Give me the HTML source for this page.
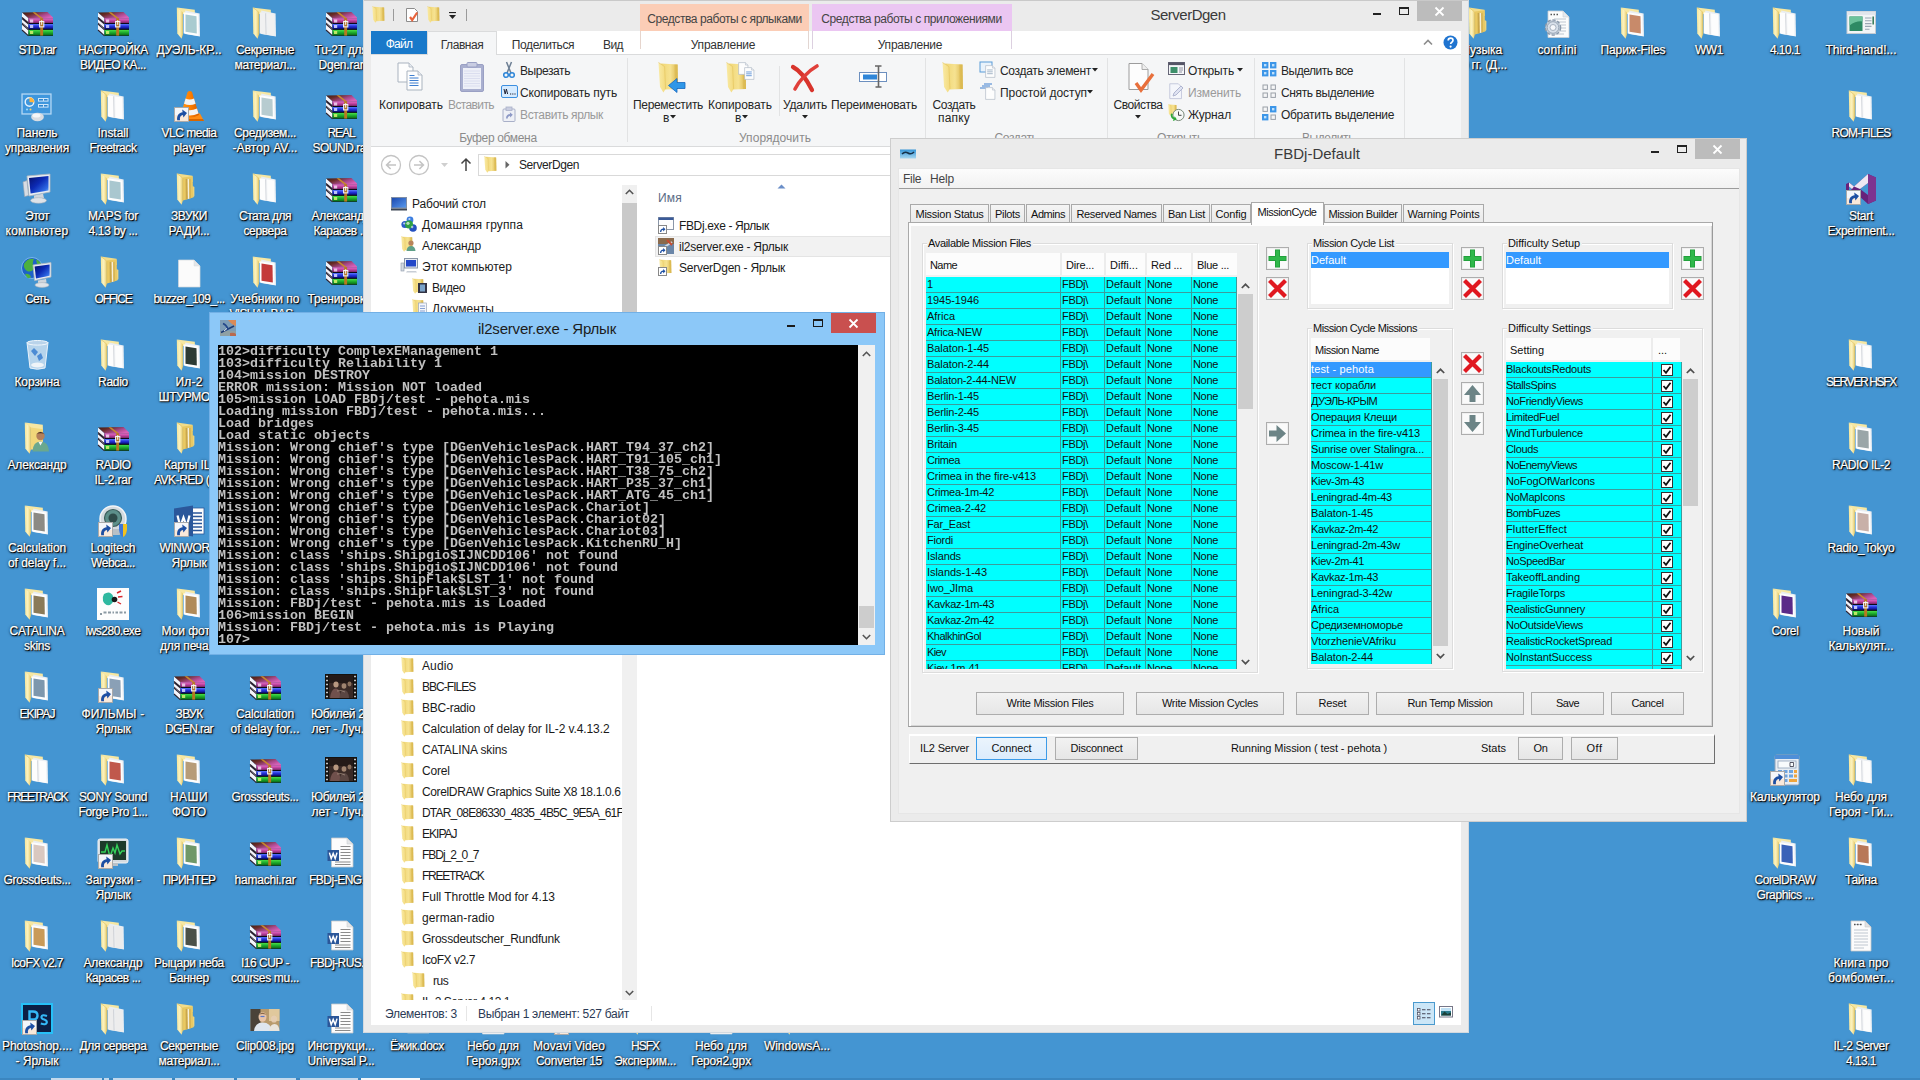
<!DOCTYPE html>
<html><head><meta charset="utf-8"><title>desktop</title>
<style>
*{box-sizing:border-box;margin:0;padding:0}
html,body{width:1920px;height:1080px;overflow:hidden}
body{background:#4495d2;font-family:"Liberation Sans",sans-serif;font-size:12px;color:#000;position:relative}
.abs{position:absolute}
.t{position:absolute;white-space:nowrap;line-height:14px}
/* desktop icons */
.di{position:absolute;width:76px;height:83px}
.di svg.ic{position:absolute;left:22px;top:7px;width:32px;height:32px;overflow:visible}
.di svg.sc{position:absolute;left:23px;top:24px;width:15px;height:15px}
.di .lb{position:absolute;left:-12px;width:100px;top:43px;text-align:center;color:#fff;font-size:12px;line-height:15px;letter-spacing:-0.25px;white-space:nowrap;
 -webkit-text-stroke:.25px #fff;text-shadow:1px 1px 0 rgba(0,0,0,.8),1px 1px 2px #000,0 0 3px rgba(0,0,0,.55),0 1px 1px rgba(0,0,0,.5)}
/* explorer */
#ex{position:absolute;left:363px;top:0;width:1106px;height:1033px;background:#ebebeb;border:1px solid #b9b9b9;border-top-color:#c8c8c8;overflow:hidden}
#ex .t{font-size:12px;letter-spacing:-0.15px;color:#262626}
/* console */
#co{position:absolute;left:209px;top:312px;width:676px;height:343px;background:#8cc8f8;border:1px solid #5f9ed1;box-shadow:0 0 6px rgba(0,0,0,.25);overflow:hidden}
#co pre{filter:grayscale(1);position:absolute;left:9px;top:33px;width:640px;height:300px;background:#000;color:#c0c0c0;font-family:"Liberation Mono",monospace;font-weight:bold;font-size:13.33px;line-height:12px;overflow:hidden;letter-spacing:0}
/* fbdj */
#fb{position:absolute;left:890px;top:138px;width:857px;height:684px;background:#ebebeb;border:1px solid #b4b4b4;overflow:hidden}
#fb .t{font-size:11px;letter-spacing:-0.3px;line-height:13px;color:#111}
</style></head>
<body>
<svg width="0" height="0" style="position:absolute"><defs>
<linearGradient id="gTop" x1="0" y1="0" x2="1" y2="0.6"><stop offset="0" stop-color="#3c1c10"/><stop offset=".35" stop-color="#6a2c28"/><stop offset=".7" stop-color="#a8488a"/><stop offset="1" stop-color="#d860b8"/></linearGradient>
<linearGradient id="gPur" x1="0" y1="0" x2="0" y2="1"><stop offset="0" stop-color="#e670c8"/><stop offset=".5" stop-color="#c044a0"/><stop offset="1" stop-color="#7a2466"/></linearGradient>
<linearGradient id="gBlu" x1="0" y1="0" x2="0" y2="1"><stop offset="0" stop-color="#5a78ff"/><stop offset=".5" stop-color="#2230d8"/><stop offset="1" stop-color="#0a1080"/></linearGradient>
<linearGradient id="gGrn" x1="0" y1="0" x2="0" y2="1"><stop offset="0" stop-color="#48e048"/><stop offset=".5" stop-color="#1ca82c"/><stop offset="1" stop-color="#0a6414"/></linearGradient>
<linearGradient id="gFold" x1="0" y1="0" x2="1" y2="1"><stop offset="0" stop-color="#fbf0b4"/><stop offset=".6" stop-color="#f3db80"/><stop offset="1" stop-color="#e4c25c"/></linearGradient>
<linearGradient id="gFoldS" x1="0" y1="0" x2="1" y2="0"><stop offset="0" stop-color="#f7e699"/><stop offset=".5" stop-color="#fbf2c0"/><stop offset="1" stop-color="#e8c964"/></linearGradient>
<linearGradient id="gCone" x1="0" y1="0" x2="1" y2="0"><stop offset="0" stop-color="#ff9a1e"/><stop offset=".5" stop-color="#ff8000"/><stop offset="1" stop-color="#d85e00"/></linearGradient>
<linearGradient id="gScr" x1="0" y1="0" x2="1" y2="1"><stop offset="0" stop-color="#06106a"/><stop offset=".45" stop-color="#0c2ab4"/><stop offset=".8" stop-color="#2f6ae4"/><stop offset="1" stop-color="#8cc4ff"/></linearGradient>


<linearGradient id="gFw1" x1="0" y1="0" x2="1" y2="0"><stop offset="0" stop-color="#f0d674"/><stop offset=".55" stop-color="#f6e291"/><stop offset="1" stop-color="#dcb84e"/></linearGradient>
<linearGradient id="gFw2" x1="0" y1="0" x2="1" y2="0"><stop offset="0" stop-color="#f9eaa4"/><stop offset="1" stop-color="#f3da7e"/></linearGradient>
<symbol id="fwin" viewBox="0 0 21 31" preserveAspectRatio="none">
 <polygon points="3,1.5 19.6,2.6 20,27 7,27.6" fill="url(#gFw1)"/>
 <polygon points="16.5,2.4 19.6,2.6 20,27 17,27.1" fill="#d9b64c" opacity=".55"/>
 <polygon points="0.5,0.5 6.6,4.6 7.6,27 5.4,30.6 2,25" fill="url(#gFw2)"/>
 <path d="M0.5 0.5 L6.6 4.6 L7.6 27" fill="none" stroke="#e3c25c" stroke-width=".6"/>
</symbol>

<symbol id="rar" viewBox="0 0 32 32">
 <polygon points="1,5.5 26.5,5 32.5,11 7.5,11.5" fill="url(#gTop)"/>
 <polygon points="1,5.8 7.5,11.6 7.5,28.8 1,23" fill="#f4f4fa"/>
 <path d="M1 11.6 L7.5 17.2 M1 17.2 L7.5 22.8 M1 23 L7.5 28.8 M1 10.3 L7.5 16" stroke="#2a2230" stroke-width="1.1" fill="none"/>
 <path d="M1 15.9 L7.5 21.6" stroke="#2a2230" stroke-width="1" fill="none"/>
 <rect x="7.5" y="11.2" width="25" height="17.6" fill="#0a0a18"/>
 <rect x="7.5" y="11.2" width="25" height="4.8" fill="url(#gPur)"/>
 <rect x="7.5" y="17" width="25" height="4.8" fill="url(#gBlu)"/>
 <rect x="7.5" y="22.9" width="25" height="5.6" fill="url(#gGrn)"/>
 <rect x="9" y="12.5" width="3.2" height="3" fill="#f0d8ee" opacity=".85"/>
 <rect x="9" y="18" width="3.2" height="3" fill="#d8dcff" opacity=".85"/>
 <rect x="9" y="24" width="3.2" height="3" fill="#d8f070" opacity=".85"/>
 <polygon points="11.5,5.2 14,5.2 21.8,11.2 19.2,11.2" fill="#c88a2c"/>
 <rect x="19.2" y="11.2" width="2.9" height="17.4" fill="#b87820"/>
 <rect x="18.6" y="14.5" width="4.2" height="5.4" fill="none" stroke="#f2f2f2" stroke-width="1.1"/>
 <rect x="20.2" y="13.2" width="1" height="4.6" fill="#fafafa"/>
</symbol>

<symbol id="folder" viewBox="0 0 32 32">
 <polygon points="4,0.6 21.8,2.8 22,9 10,7" fill="#f6e7a2"/>
 <polygon points="12.2,3.6 26.6,6.4 27,29.6 12.2,27" fill="#e9eef3"/>
 <polygon points="10.6,5.2 25.2,7.6 25.6,29 10.6,26.4" style="fill:var(--p,#fdfdfd)"/>
 <path d="M16.800 6.300 L17.200 27.600" stroke="#b9bec6" stroke-width=".8"/>
 <path d="M17.600 6.400 L18 27.700" stroke="#eef0f3" stroke-width=".8"/>
 <polygon points="3.8,0.4 9.9,5.2 9.9,27.4 8.6,31.8 4.3,26.6" fill="url(#gFoldS)"/>
 <path d="M3.8 0.4 L9.9 5.2 L9.9 27.400" fill="none" stroke="#e0bf58" stroke-width=".5"/>
</symbol>


<symbol id="folderf" viewBox="0 0 32 32">
 <polygon points="4,0.600 19.500,2.800 19.800,9 10,7" fill="#f2dc8a"/>
 <polygon points="9.900,4.400 19.600,3.200 20.200,24.500 9.900,27.400" fill="#e9c963"/>
 <polygon points="12.600,6 14.600,5.700 14.900,26 12.800,26.600" fill="#c9a64a"/>
 <polygon points="14.600,5.700 16.200,6.200 16.400,25.600 14.900,26" fill="#f6f0dc"/>
 <polygon points="16.200,6.200 17.600,5.800 17.900,25.200 16.400,25.600" fill="#d2b054"/>
 <polygon points="19.600,13 21.400,14 21.400,23 20.200,24.500" fill="#eed37a"/>
 <polygon points="3.800,0.400 9.900,5.200 9.900,27.400 8.600,31.800 4.300,26.600" fill="url(#gFoldS)"/>
 <path d="M3.800 0.400 L9.900 5.200 L9.900 27.400" fill="none" stroke="#e0bf58" stroke-width=".5"/>
</symbol>

<symbol id="folderb" viewBox="0 0 32 32">
 <polygon points="4,0.6 21.8,2.8 22,9 10,7" fill="#f6e7a2"/>
 <polygon points="12.2,3.6 26.6,6.4 27,29.6 12.2,27" fill="#e9eef3"/>
 <polygon points="10.6,5.2 25.2,7.6 25.6,29 10.6,26.4" fill="#fdfdfd"/>
 <polygon points="12.5,7.5 23.5,9.3 23.8,26.6 12.5,24.7" style="fill:var(--p,#8fb0b8)"/>
 <polygon points="3.8,0.4 9.9,5.2 9.9,27.4 8.6,31.8 4.3,26.6" fill="url(#gFoldS)"/>
</symbol>

<symbol id="fsm" viewBox="0 0 16 16">
 <path d="M1.5 1.5 h5 l1 1.5 h6.5 v11.5 h-12.5z" fill="#e6c35a"/>
 <path d="M1.5 4.5 h12.5 v10 h-12.5z" fill="#f7e08a"/>
 <path d="M9.5 1.8 h4 v12.7 h-4z" fill="#f2d264" opacity=".8"/>
 <path d="M1.5 14.5 h12.5" stroke="#cfa83e" stroke-width=".8"/>
</symbol>

<symbol id="doc" viewBox="0 0 32 32">
 <path d="M5.500 4 h15.500 l6 6 v21 h-21.500z" fill="#fbfbfb" stroke="#d4d8dc" stroke-width=".7"/>
 <path d="M21 4 v6 h6z" fill="#e4e6e8" stroke="#d4d8dc" stroke-width=".5"/>
</symbol>

<symbol id="txt" viewBox="0 0 32 32">
 <path d="M6 1 h14 l6 6 v24 h-20z" fill="#fcfcfc" stroke="#c9c9c9" stroke-width=".8"/>
 <path d="M20 1 v6 h6z" fill="#e2e2e2" stroke="#c9c9c9" stroke-width=".6"/>
 <path d="M9 4.5h8 M9 10h14 M9 13h14 M9 16h14 M9 19h14 M9 22h14 M9 25h14 M9 28h10" stroke="#b9c2cc" stroke-width=".9"/>
 <path d="M9 4.5h1.5 M12 4.5h1.5 M15 4.5h1.5" stroke="#555" stroke-width="1.4"/>
</symbol>

<symbol id="ini" viewBox="0 0 32 32">
 <path d="M7 4 h15 l6 6 v20.500 h-21z" fill="#fcfcfc" stroke="#c9ced4" stroke-width=".8"/>
 <path d="M22 4v6h6" fill="#e6e9ec" stroke="#c9ced4" stroke-width=".6"/>
 <path d="M13 12h12 M13 15h12 M13 18h12 M13 21h12 M13 24h12 M13 27h10" stroke="#b9c2cc" stroke-width=".9"/>
 <path d="M9.500 7.500h1.500 M12.500 7.500h1.500 M15.500 7.500h1.500" stroke="#555" stroke-width="1.400"/>
 <circle cx="12" cy="20.500" r="7.600" fill="#c6d0dc" stroke="#8a98aa" stroke-width="1.400" stroke-dasharray="3.200 1.800"/>
 <circle cx="12" cy="20.500" r="5.800" fill="#d8e0ea" stroke="#8d9aab" stroke-width=".8"/>
 <circle cx="12" cy="20.500" r="3" fill="#f6f8fb" stroke="#8d9aab" stroke-width=".7"/>
</symbol>

<symbol id="word" viewBox="0 0 32 32">
 <path d="M6.500 1 h15.500 l6 6 v23 h-21.500z" fill="#fcfcfc" stroke="#c4c8cc" stroke-width=".8"/>
 <path d="M22 1 v6 h6z" fill="#e4e6e8" stroke="#c4c8cc" stroke-width=".5"/>
 <path d="M15.500 9.500h10 M15.500 12.500h10 M15.500 15.500h10 M15.500 18.500h10 M15.500 21.500h10 M10 25h15.500 M10 27.500h15.500" stroke="#8a8a8a" stroke-width="1"/>
 <rect x="2.500" y="13" width="11.500" height="11" fill="#2a5699"/>
 <path d="M4.400 15.600 L6.200 21.600 L8.200 16.600 L10.200 21.600 L12 15.600" fill="none" stroke="#fff" stroke-width="1.500"/>
</symbol>


<symbol id="wordapp" viewBox="0 0 32 32">
 <rect x="15" y="3" width="16" height="26" fill="#fdfdfd" stroke="#2b579a" stroke-width=".8"/>
 <path d="M20 8h9M20 11.500h9M20 15h9M20 18.500h9M20 22h9M20 25.500h9" stroke="#2b579a" stroke-width="1.300"/>
 <polygon points="1,3.500 20,0.500 20,31.500 1,28.500" fill="#2b579a"/>
 <path d="M4.500 10.500 L7.300 21.500 L10.500 12.500 L13.700 21.500 L16.500 10.500" fill="none" stroke="#fff" stroke-width="2.200"/>
</symbol>

<symbol id="sc" viewBox="0 0 15 15">
 <rect x=".5" y=".5" width="14" height="14" fill="#f4f6fa" stroke="#a9a9a9" stroke-width="1"/>
 <rect x="1" y="8" width="13" height="6" fill="#fbe6d2" opacity=".8"/>
 <path d="M3.2 13.2 C2.6 8.5 5 5.5 8.6 5.2 L8.2 2.6 L13 6 L9.4 10.6 L9 8 C6.8 8.2 5.4 10 6 13.2z" fill="#1d4fa3"/>
</symbol>

<symbol id="vlc" viewBox="0 0 32 32">
 <polygon points="3,31 31,31 27,23.5 7,23.5" fill="#ff8c14"/>
 <polygon points="3,31 31,31 30,29 4,29" fill="#d86600"/>
 <path d="M14.6 2 Q16.8 -0.2 19 2 L26 25 Q16.8 30 7.6 25z" fill="url(#gCone)"/>
 <path d="M12.6 8.6 Q16.8 10.6 21 8.6 L22.6 13.8 Q16.8 16.4 11 13.8z" fill="#f4f4f4"/>
 <path d="M9.6 18.6 Q16.8 22 24 18.6 L25.5 23.4 Q16.8 27.4 8.1 23.4z" fill="#f4f4f4"/>
</symbol>

<symbol id="cpanel" viewBox="0 0 32 32">
 <rect x="1" y="4" width="29" height="20" fill="#4ea3e4" stroke="#b9daf5" stroke-width="1.2"/>
 <rect x="2" y="5" width="27" height="18" fill="#3f97dd"/>
 <circle cx="8.5" cy="12" r="4.3" fill="none" stroke="#e8f3fc" stroke-width="1.4"/>
 <path d="M8.5 12 L8.5 7.2 A4.8 4.8 0 0 1 13.2 12.6z" fill="#ffb43c"/>
 <rect x="17" y="8" width="10.5" height="3.6" fill="#cfe7fa"/><rect x="18" y="9" width="4" height="1.6" fill="#2f86cf"/><rect x="23" y="9" width="3.5" height="1.6" fill="#2f86cf"/>
 <rect x="17" y="14" width="10.5" height="3.6" fill="#cfe7fa"/><rect x="18" y="15" width="4" height="1.6" fill="#2f86cf"/><rect x="23" y="15" width="3.5" height="1.6" fill="#2f86cf"/>
 <circle cx="6" cy="19.5" r="1" fill="#9fe0ff"/><circle cx="9.5" cy="19.5" r="1" fill="#ffd060"/>
 <ellipse cx="16.5" cy="27" rx="6.4" ry="4.2" fill="#d9dde2"/><ellipse cx="15.5" cy="25.6" rx="4" ry="2" fill="#f4f6f8"/>
</symbol>

<symbol id="computer" viewBox="0 0 32 32">
 <polygon points="6,3 29,1 29,19 8,23" fill="#e9edf2" stroke="#aeb7c2" stroke-width=".8"/>
 <polygon points="8,5 27.5,3 27.5,17.5 9.6,20.6" fill="url(#gScr)"/>
 <polygon points="2,9 6,7.6 7.6,22.5 3.6,23.6" fill="#d7dce3" stroke="#9aa4b0" stroke-width=".6"/>
 <polygon points="13,22.5 22,20.8 23,25 13,26.5" fill="#cfd5dc"/>
 <ellipse cx="17.5" cy="27.5" rx="8" ry="2.8" fill="#dfe3e8" stroke="#aab2bc" stroke-width=".6"/>
</symbol>

<symbol id="network" viewBox="0 0 32 32">
 <circle cx="11" cy="12" r="10.5" fill="#1d62c8"/>
 <circle cx="11" cy="12" r="10.5" fill="none" stroke="#7ab6ee" stroke-width="1"/>
 <path d="M3 8 Q7 1.500 13 3 Q10 8 14 12 Q10 17 6 15 Q2 12 3 8z" fill="#4cb040"/>
 <path d="M4 18 Q8 17 10 21 Q8 23 6 21.500z" fill="#4cb040"/>
 <path d="M15 3.500 Q19 5 20 8 L16 8z" fill="#4cb040"/>
 <polygon points="12,9 30,6.6 30,21 13.6,24.6" fill="#e9edf2" stroke="#aeb7c2" stroke-width=".8"/>
 <polygon points="13.6,10.6 28.6,8.6 28.6,19.8 15,22.6" fill="url(#gScr)"/>
 <polygon points="17,24.5 25,23 25.6,26.6 17,28" fill="#cfd5dc"/>
 <ellipse cx="21" cy="29" rx="7" ry="2.4" fill="#dfe3e8" stroke="#aab2bc" stroke-width=".6"/>
</symbol>

<symbol id="bin" viewBox="0 0 32 32">
 <path d="M6 3.5 Q16 0.5 27 3.5 L24 29 Q16 31.5 9 29z" fill="#d6e6f4" fill-opacity=".78" stroke="#e9f2fa" stroke-width="1"/>
 <ellipse cx="16.5" cy="3.8" rx="10.5" ry="2.3" fill="#b9d3ea" stroke="#f1f7fc" stroke-width="1"/>
 <path d="M10 12 L13 9 L17 13 L14 17z M16 17 L20 14 L22 19 L18 22z" fill="#3b7fd0" opacity=".85"/>
 <ellipse cx="16.5" cy="26" rx="6.4" ry="2.6" fill="#f5f7fa" opacity=".9"/>
</symbol>

<symbol id="user" viewBox="0 0 32 32">
 <polygon points="4,0.6 21.8,2.8 22,9 10,7" fill="#f6e7a2"/>
 <polygon points="3.8,0.4 9.9,5.2 9.9,27.4 8.6,31.8 4.3,26.6" fill="url(#gFoldS)"/>
 <polygon points="9.9,5.4 22,7.2 22,28 9.9,27.4" fill="#f1d77a"/>
 <circle cx="19.5" cy="14" r="4.2" fill="#b4805a"/>
 <path d="M15 12.6 Q19.5 7.5 24 12.6 Q22 10.8 19.5 11.2 Q17 10.8 15 12.6z" fill="#3c2a1e"/>
 <path d="M11.5 29.5 Q12 19.5 19.5 19.5 Q27.5 19.5 28 29.5z" fill="#6aa88e"/>
 <path d="M17.4 19.8 L19.5 23.5 L21.6 19.8z" fill="#f4f4f4"/>
</symbol>

<symbol id="webcam" viewBox="0 0 32 32">
 <circle cx="16" cy="14" r="13" fill="#d4dadf" stroke="#f3f5f7" stroke-width="1.5"/>
 <circle cx="16" cy="13" r="8.5" fill="#5d8f8a" stroke="#3d5f5c" stroke-width="1.2"/>
 <circle cx="16" cy="13" r="4.5" fill="#2f4b49"/>
 <rect x="8" y="24" width="16" height="6" rx="2" fill="#b8c0c6"/>
 <path d="M22 19 l8 0 l0 6 q-1 6 -4 7 q-3 -1 -4 -7z" fill="#3f78d8"/>
 <path d="M26 19 l4 0 l0 6 q-1 6 -4 7z" fill="#f2c21e"/>
</symbol>

<symbol id="logi" viewBox="0 0 32 32">
 <rect x="0" y="0" width="32" height="32" fill="#fdfdfd"/>
 <path d="M7 6 Q13 2 16 8 Q18 14 13 17 Q8 18 6 13 Q5 9 7 6z" fill="#2fb8a0"/>
 <circle cx="17.5" cy="11.5" r="2.8" fill="#1b1b1b"/>
 <path d="M20 5 L24 3 M21 9 L25.5 8.5 M20.5 14 L24 16" stroke="#d8262c" stroke-width="1.4"/>
 <rect x="3" y="22" width="26" height="5" fill="#fdfdfd"/>
 <path d="M3 26h2 M6.5 24.5h3 M11 24.5h3 M15.5 24.5h1.5 M18.5 24.5h2.5 M22.5 24.5h3 M27 24.5h2" stroke="#8c9aa3" stroke-width="2.2"/>
</symbol>

<symbol id="monitor" viewBox="0 0 32 32">
 <rect x="1" y="2" width="30" height="24" rx="2" fill="#d5dbe0" stroke="#f1f3f5" stroke-width="1"/>
 <rect x="3" y="4" width="26" height="19" fill="#1d3b2a"/>
 <path d="M4 15 h4 l2 -7 l3 12 l3 -9 l2 5 l2 -8 l3 9 l2 -3 h3" stroke="#35d25a" stroke-width="1.4" fill="none"/>
 <rect x="11" y="26" width="10" height="3" fill="#b9c1c8"/>
</symbol>

<symbol id="ps" viewBox="0 0 32 32">
 <rect x="1" y="1" width="30" height="29" fill="#0c1f45" stroke="#26c0f8" stroke-width="2"/>
 <path d="M8.500 23 V8.500 H12 Q16.500 8.500 16.500 12.500 Q16.500 16.500 12 16.500 H8.500" fill="none" stroke="#35b8f6" stroke-width="2.400"/>
 <path d="M26 13 q-5 -2 -5.600 1 q0 1.800 2.800 2.600 q3 1 2.600 3 q-0.800 2.800 -6 1" fill="none" stroke="#35b8f6" stroke-width="2.100"/>
</symbol>

<symbol id="photo" viewBox="0 0 32 32">
 <rect x="1.500" y="6" width="29" height="22" fill="#b89a6c"/>
 <rect x="1.500" y="6" width="10" height="22" fill="#4a4238"/>
 <rect x="20" y="6" width="10.500" height="12" fill="#e0c89c"/>
 <ellipse cx="13.500" cy="14" rx="4" ry="4.800" fill="#e8c4a8"/>
 <path d="M5 28 Q6 19.500 13.500 19.500 Q22 19.500 23 28z" fill="#dfe6ee"/>
 <ellipse cx="25" cy="16" rx="3" ry="3.600" fill="#e6cdb4" opacity=".9"/>
 <path d="M20 28 Q21 21 25.500 21 Q30 21 30.500 28z" fill="#e9e4dc"/>
 <path d="M9.600 12 Q13.500 7.500 17.400 12 Q13.500 10.200 9.600 12z" fill="#8a6a48"/>
 <path d="M11.500 13.500h4" stroke="#5a78c8" stroke-width="1.200"/>
</symbol>

<symbol id="video" viewBox="0 0 32 32">
 <rect x="0" y="3" width="32" height="25" fill="#141210"/>
 <rect x="4" y="4" width="24" height="23" fill="#3a2a26"/>
 <rect x="4" y="4" width="24" height="8" fill="#241a18"/>
 <ellipse cx="11" cy="13.500" rx="2.600" ry="3" fill="#b89880"/><ellipse cx="19" cy="15" rx="2.400" ry="2.800" fill="#a08470"/><ellipse cx="24.500" cy="13" rx="2" ry="2.400" fill="#8a705c"/>
 <path d="M5 27 Q6 17.500 11 17.500 Q15.500 18 15.500 27z" fill="#70504c"/><path d="M14.500 27 Q15 19 19 19 Q23.500 19 24 27z" fill="#5a4642"/>
 <path d="M12 20 q4 -1.500 8 1" stroke="#c8b4a0" stroke-width="1" fill="none" opacity=".5"/>
 <path d="M1 5.500h2 M1 9.500h2 M1 13.500h2 M1 17.500h2 M1 21.500h2 M1 25.500h2 M29 5.500h2 M29 9.500h2 M29 13.500h2 M29 17.500h2 M29 21.500h2 M29 25.500h2" stroke="#c4c4c4" stroke-width="1.600"/>
</symbol>

<symbol id="calc" viewBox="0 0 32 32">
 <rect x="6" y="1" width="24" height="30" rx="1.5" fill="#e8edf3" stroke="#8ea2ba" stroke-width="1"/>
 <rect x="6" y="1" width="24" height="4" fill="#4f8fd8"/>
 <rect x="9" y="7" width="18" height="7" fill="#f8fbfd" stroke="#8ea2ba" stroke-width=".8"/>
 <path d="M21 8.5h3.6v4h-3.6z" fill="none" stroke="#445" stroke-width=".9"/>
 <g fill="#6da4e0"><rect x="9" y="16" width="4" height="3"/><rect x="14.5" y="16" width="4" height="3"/><rect x="20" y="16" width="4" height="3"/><rect x="9" y="20.5" width="4" height="3"/><rect x="14.5" y="20.5" width="4" height="3"/><rect x="20" y="20.5" width="4" height="3"/><rect x="9" y="25" width="4" height="3"/><rect x="14.5" y="25" width="4" height="3"/></g>
 <g fill="#f0a53c"><rect x="25" y="16" width="3" height="3"/><rect x="25" y="20.5" width="3" height="3"/><rect x="20" y="25" width="8" height="3"/></g>
</symbol>

<symbol id="vs" viewBox="0 0 32 32">
 <path d="M23 1 L31 4.5 V27.5 L23 31 L9 18.5 L4 22.5 L1 21 V11 L4 9.5 L9 13.5z M23 10 L15 16 L23 22z M4 13.5 V18.5 L7 16z" fill="#68217a" fill-rule="evenodd"/>
 <path d="M23 1 L31 4.5 V27.5 L23 31z" fill="#7d3390"/>
 <path d="M9 13.5 L23 1 V10 L15 16z" fill="#f7f2fa" opacity=".95"/>
 <path d="M4 9.5 L9 13.5 L7 16 L4 13.5z" fill="#f7f2fa" opacity=".95"/>
</symbol>

<symbol id="appwin" viewBox="0 0 32 32">
 <rect x="2" y="4.500" width="28.500" height="22" fill="#f3f5f7" stroke="#c4cbd3" stroke-width="1"/>
 <rect x="2" y="4.500" width="28.500" height="3.400" fill="#e1e6ec"/>
 <rect x="4.500" y="9.500" width="13" height="14.500" fill="#2d8a64"/>
 <path d="M4.500 9.500h13v5q-6 -1 -13 4z" fill="#6cc29c"/>
 <path d="M20 11h6.500 M20 13.800h6.500 M20 16.600h6.500 M20 19.400h6.500 M20 22.200h4.500" stroke="#9aa6b3" stroke-width="1.100"/>
 <rect x="27.400" y="9.500" width="1.600" height="8" fill="#3d7f5f"/>
</symbol>
</defs></svg>
<div id="desk">
<div class="di" style="left:-1px;top:0px"><svg class="ic"><use href="#rar"/></svg><div class="lb"><span style="letter-spacing:-0.714px">STD.rar</span></div></div>
<div class="di" style="left:-1px;top:83px"><svg class="ic"><use href="#cpanel"/></svg><div class="lb"><span style="letter-spacing:-0.075px">Панель</span><br><span style="letter-spacing:-0.145px">управления</span></div></div>
<div class="di" style="left:-1px;top:166px"><svg class="ic"><use href="#computer"/></svg><div class="lb"><span style="letter-spacing:-0.473px">Этот</span><br><span style="letter-spacing:0.278px">компьютер</span></div></div>
<div class="di" style="left:-1px;top:249px"><svg class="ic"><use href="#network"/></svg><div class="lb"><span style="letter-spacing:-0.672px">Сеть</span></div></div>
<div class="di" style="left:-1px;top:332px"><svg class="ic"><use href="#bin"/></svg><div class="lb"><span style="letter-spacing:-0.101px">Корзина</span></div></div>
<div class="di" style="left:-1px;top:415px"><svg class="ic"><use href="#user"/></svg><div class="lb"><span style="letter-spacing:-0.115px">Александр</span></div></div>
<div class="di" style="left:-1px;top:498px"><svg class="ic" style="--p:#8c8a84"><use href="#folderb"/></svg><div class="lb"><span style="letter-spacing:-0.124px">Calculation</span><br><span style="letter-spacing:-0.053px">of delay f...</span></div></div>
<div class="di" style="left:-1px;top:581px"><svg class="ic" style="--p:#8a7a58"><use href="#folderb"/></svg><div class="lb"><span style="letter-spacing:-0.238px">CATALINA</span><br><span style="letter-spacing:-0.268px">skins</span></div></div>
<div class="di" style="left:-1px;top:664px"><svg class="ic" style="--p:#7d97ad"><use href="#folderb"/></svg><div class="lb"><span style="letter-spacing:-0.91px">EKIPAJ</span></div></div>
<div class="di" style="left:-1px;top:747px"><svg class="ic"><use href="#folder"/></svg><div class="lb"><span style="letter-spacing:-1.408px">FREETRACK</span></div></div>
<div class="di" style="left:-1px;top:830px"><svg class="ic" style="--p:#d9c8c0"><use href="#folderb"/></svg><div class="lb"><span style="letter-spacing:-0.335px">Grossdeuts...</span></div></div>
<div class="di" style="left:-1px;top:913px"><svg class="ic" style="--p:#c99a58"><use href="#folderb"/></svg><div class="lb"><span style="letter-spacing:-0.535px">IcoFX v2.7</span></div></div>
<div class="di" style="left:-1px;top:996px"><svg class="ic"><use href="#ps"/></svg><svg class="sc"><use href="#sc"/></svg><div class="lb"><span style="letter-spacing:-0.055px">Photoshop....</span><br><span style="letter-spacing:-0.019px">- Ярлык</span></div></div>
<div class="di" style="left:75px;top:0px"><svg class="ic"><use href="#rar"/></svg><div class="lb"><span style="letter-spacing:-0.3px">НАСТРОЙКА</span><br><span style="letter-spacing:-0.402px">ВИДЕО КА...</span></div></div>
<div class="di" style="left:75px;top:83px"><svg class="ic"><use href="#folder"/></svg><div class="lb"><span style="letter-spacing:-0.049px">Install</span><br><span style="letter-spacing:-0.408px">Freetrack</span></div></div>
<div class="di" style="left:75px;top:166px"><svg class="ic" style="--p:#a9c7cf"><use href="#folderb"/></svg><div class="lb"><span style="letter-spacing:-0.168px">MAPS for</span><br><span style="letter-spacing:-0.336px">4.13 by ...</span></div></div>
<div class="di" style="left:75px;top:249px"><svg class="ic"><use href="#folderf"/></svg><div class="lb"><span style="letter-spacing:-1.166px">OFFICE</span></div></div>
<div class="di" style="left:75px;top:332px"><svg class="ic"><use href="#folder"/></svg><div class="lb"><span style="letter-spacing:-0.27px">Radio</span></div></div>
<div class="di" style="left:75px;top:415px"><svg class="ic"><use href="#rar"/></svg><div class="lb"><span style="letter-spacing:-0.601px">RADIO</span><br><span style="letter-spacing:-0.209px">IL-2.rar</span></div></div>
<div class="di" style="left:75px;top:498px"><svg class="ic"><use href="#webcam"/></svg><svg class="sc"><use href="#sc"/></svg><div class="lb"><span style="letter-spacing:-0.046px">Logitech</span><br><span style="letter-spacing:-0.391px">Webca...</span></div></div>
<div class="di" style="left:75px;top:581px"><svg class="ic"><use href="#logi"/></svg><div class="lb"><span style="letter-spacing:-0.503px">lws280.exe</span></div></div>
<div class="di" style="left:75px;top:664px"><svg class="ic" style="--p:#8aa0b6"><use href="#folderb"/></svg><svg class="sc"><use href="#sc"/></svg><div class="lb"><span style="letter-spacing:0.227px">ФИЛЬМЫ -</span><br><span style="letter-spacing:-0.161px">Ярлык</span></div></div>
<div class="di" style="left:75px;top:747px"><svg class="ic" style="--p:#c0584c"><use href="#folderb"/></svg><div class="lb"><span style="letter-spacing:-0.382px">SONY Sound</span><br><span style="letter-spacing:-0.311px">Forge Pro 1...</span></div></div>
<div class="di" style="left:75px;top:830px"><svg class="ic"><use href="#monitor"/></svg><svg class="sc"><use href="#sc"/></svg><div class="lb"><span style="letter-spacing:-0.062px">Загрузки -</span><br><span style="letter-spacing:-0.161px">Ярлык</span></div></div>
<div class="di" style="left:75px;top:913px"><svg class="ic" style="--p:#ececec"><use href="#folder"/></svg><div class="lb"><span style="letter-spacing:-0.115px">Александр</span><br><span style="letter-spacing:-0.399px">Карасев ...</span></div></div>
<div class="di" style="left:75px;top:996px"><svg class="ic" style="--p:#ededed"><use href="#folder"/></svg><div class="lb"><span style="letter-spacing:-0.324px">Для сервера</span></div></div>
<div class="di" style="left:151px;top:0px"><svg class="ic" style="--p:#a9cbd0"><use href="#folderb"/></svg><div class="lb"><span style="letter-spacing:-0.12px">ДУЭЛЬ-КР...</span></div></div>
<div class="di" style="left:151px;top:83px"><svg class="ic"><use href="#vlc"/></svg><svg class="sc"><use href="#sc"/></svg><div class="lb"><span style="letter-spacing:-0.484px">VLC media</span><br><span style="letter-spacing:-0.114px">player</span></div></div>
<div class="di" style="left:151px;top:166px"><svg class="ic"><use href="#folderf"/></svg><div class="lb"><span style="letter-spacing:-0.419px">ЗВУКИ</span><br><span style="letter-spacing:-0.194px">РАДИ...</span></div></div>
<div class="di" style="left:151px;top:249px"><svg class="ic"><use href="#doc"/></svg><div class="lb"><span style="letter-spacing:-0.599px">buzzer_109_...</span></div></div>
<div class="di" style="left:151px;top:332px"><svg class="ic" style="--p:#2c3a34"><use href="#folderb"/></svg><div class="lb"><span style="letter-spacing:0.176px">Ил-2</span><br><span style="letter-spacing:-0.239px">ШТУРМО...</span></div></div>
<div class="di" style="left:151px;top:415px"><svg class="ic"><use href="#folderf"/></svg><div class="lb"><span style="letter-spacing:-0.17px">Карты IL-</span><br><span style="letter-spacing:-0.497px">AVK-RED (1...</span></div></div>
<div class="di" style="left:151px;top:498px"><svg class="ic"><use href="#wordapp"/></svg><svg class="sc"><use href="#sc"/></svg><div class="lb"><span style="letter-spacing:-0.406px">WINWOR...</span><br><span style="letter-spacing:-0.161px">Ярлык</span></div></div>
<div class="di" style="left:151px;top:581px"><svg class="ic" style="--p:#b08a58"><use href="#folderb"/></svg><div class="lb"><span style="letter-spacing:-0.02px">Мои фото</span><br><span style="letter-spacing:-0.14px">для печа...</span></div></div>
<div class="di" style="left:151px;top:664px"><svg class="ic"><use href="#rar"/></svg><div class="lb"><span style="letter-spacing:-0.617px">ЗВУК</span><br><span style="letter-spacing:-0.584px">DGEN.rar</span></div></div>
<div class="di" style="left:151px;top:747px"><svg class="ic" style="--p:#b79c78"><use href="#folderb"/></svg><div class="lb"><span style="letter-spacing:0.426px">НАШИ</span><br><span style="letter-spacing:-0.146px">ФОТО</span></div></div>
<div class="di" style="left:151px;top:830px"><svg class="ic" style="--p:#6f9868"><use href="#folderb"/></svg><div class="lb"><span style="letter-spacing:-0.608px">ПРИНТЕР</span></div></div>
<div class="di" style="left:151px;top:913px"><svg class="ic" style="--p:#4a5048"><use href="#folderb"/></svg><div class="lb"><span style="letter-spacing:-0.302px">Рыцари неба</span><br><span style="letter-spacing:-0.191px">Баннер</span></div></div>
<div class="di" style="left:151px;top:996px"><svg class="ic"><use href="#folderf"/></svg><div class="lb"><span style="letter-spacing:-0.329px">Секретные</span><br><span style="letter-spacing:-0.249px">материал...</span></div></div>
<div class="di" style="left:227px;top:0px"><svg class="ic" style="--p:#f1f1f1"><use href="#folder"/></svg><div class="lb"><span style="letter-spacing:-0.329px">Секретные</span><br><span style="letter-spacing:-0.249px">материал...</span></div></div>
<div class="di" style="left:227px;top:83px"><svg class="ic" style="--p:#b7ccd0"><use href="#folderb"/></svg><div class="lb"><span style="letter-spacing:-0.34px">Средизем...</span><br><span style="letter-spacing:0.069px">-Автор AV...</span></div></div>
<div class="di" style="left:227px;top:166px"><svg class="ic"><use href="#folder"/></svg><div class="lb"><span style="letter-spacing:-0.478px">Стата для</span><br><span style="letter-spacing:-0.372px">сервера</span></div></div>
<div class="di" style="left:227px;top:249px"><svg class="ic" style="--p:#c43a3a"><use href="#folderb"/></svg><div class="lb"><span style="letter-spacing:-0.007px">Учебники по</span><br><span style="letter-spacing:-0.661px">VISUAL BAS...</span></div></div>
<div class="di" style="left:227px;top:664px"><svg class="ic"><use href="#rar"/></svg><div class="lb"><span style="letter-spacing:-0.124px">Calculation</span><br><span style="letter-spacing:0.02px">of delay for...</span></div></div>
<div class="di" style="left:227px;top:747px"><svg class="ic"><use href="#rar"/></svg><div class="lb"><span style="letter-spacing:-0.335px">Grossdeuts...</span></div></div>
<div class="di" style="left:227px;top:830px"><svg class="ic"><use href="#rar"/></svg><div class="lb"><span style="letter-spacing:-0.214px">hamachi.rar</span></div></div>
<div class="di" style="left:227px;top:913px"><svg class="ic"><use href="#rar"/></svg><div class="lb"><span style="letter-spacing:-0.496px">I16 CUP -</span><br><span style="letter-spacing:-0.309px">courses mu...</span></div></div>
<div class="di" style="left:227px;top:996px"><svg class="ic"><use href="#photo"/></svg><div class="lb"><span style="letter-spacing:-0.185px">Clip008.jpg</span></div></div>
<div class="di" style="left:303px;top:0px"><svg class="ic"><use href="#rar"/></svg><div class="lb"><span style="letter-spacing:-0.242px">Tu-2T для</span><br><span style="letter-spacing:-0.21px">Dgen.rar</span></div></div>
<div class="di" style="left:303px;top:83px"><svg class="ic"><use href="#rar"/></svg><div class="lb"><span style="letter-spacing:-1.087px">REAL</span><br><span style="letter-spacing:-0.482px">SOUND.rar</span></div></div>
<div class="di" style="left:303px;top:166px"><svg class="ic"><use href="#rar"/></svg><div class="lb"><span style="letter-spacing:-0.115px">Александр</span><br><span style="letter-spacing:-0.399px">Карасев ...</span></div></div>
<div class="di" style="left:303px;top:249px"><svg class="ic"><use href="#rar"/></svg><div class="lb"><span style="letter-spacing:-0.109px">Тренировк...</span></div></div>
<div class="di" style="left:303px;top:664px"><svg class="ic"><use href="#video"/></svg><div class="lb"><span style="letter-spacing:-0.306px">Юбилей 20</span><br><span style="letter-spacing:-0.058px">лет - Луч...</span></div></div>
<div class="di" style="left:303px;top:747px"><svg class="ic"><use href="#video"/></svg><div class="lb"><span style="letter-spacing:-0.306px">Юбилей 20</span><br><span style="letter-spacing:-0.058px">лет - Луч...</span></div></div>
<div class="di" style="left:303px;top:830px"><svg class="ic"><use href="#word"/></svg><div class="lb"><span style="letter-spacing:-0.5px">FBDj-ENG....</span></div></div>
<div class="di" style="left:303px;top:913px"><svg class="ic"><use href="#word"/></svg><div class="lb"><span style="letter-spacing:-0.611px">FBDj-RUS....</span></div></div>
<div class="di" style="left:303px;top:996px"><svg class="ic"><use href="#word"/></svg><div class="lb"><span style="letter-spacing:-0.093px">Инструкци...</span><br><span style="letter-spacing:-0.2px">Universal P...</span></div></div>
<div class="di" style="left:379px;top:996px"><svg class="ic"><use href="#word"/></svg><div class="lb"><span style="letter-spacing:-0.297px">Ёжик.docx</span></div></div>
<div class="di" style="left:455px;top:996px"><svg class="ic"><use href="#doc"/></svg><div class="lb"><span style="letter-spacing:-0.073px">Небо для</span><br><span style="letter-spacing:-0.099px">Героя.gpx</span></div></div>
<div class="di" style="left:531px;top:996px"><svg class="ic"><use href="#folder"/></svg><svg class="sc"><use href="#sc"/></svg><div class="lb"><span style="letter-spacing:0.015px">Movavi Video</span><br><span style="letter-spacing:-0.28px">Converter 15</span></div></div>
<div class="di" style="left:607px;top:996px"><svg class="ic"><use href="#folder"/></svg><div class="lb"><span style="letter-spacing:-1.001px">HSFX</span><br><span style="letter-spacing:-0.255px">Эксперим...</span></div></div>
<div class="di" style="left:683px;top:996px"><svg class="ic"><use href="#doc"/></svg><div class="lb"><span style="letter-spacing:-0.073px">Небо для</span><br><span style="letter-spacing:-0.157px">Героя2.gpx</span></div></div>
<div class="di" style="left:759px;top:996px"><svg class="ic"><use href="#folder"/></svg><div class="lb"><span style="letter-spacing:-0.062px">WindowsA...</span></div></div>
<div class="di" style="left:1443px;top:0px"><svg class="ic"><use href="#folderf"/></svg><div class="lb"><span style="letter-spacing:-0.074px">Музыка</span><br><span style="letter-spacing:-0.063px">40 гг. (Д...</span></div></div>
<div class="di" style="left:1519px;top:0px"><svg class="ic"><use href="#ini"/></svg><div class="lb"><span style="letter-spacing:0.123px">conf.ini</span></div></div>
<div class="di" style="left:1595px;top:0px"><svg class="ic" style="--p:#c88a6a"><use href="#folderb"/></svg><div class="lb"><span style="letter-spacing:-0.094px">Париж-Files</span></div></div>
<div class="di" style="left:1671px;top:0px"><svg class="ic"><use href="#folder"/></svg><div class="lb"><span style="letter-spacing:-0.442px">WW1</span></div></div>
<div class="di" style="left:1747px;top:0px"><svg class="ic"><use href="#folder"/></svg><div class="lb"><span style="letter-spacing:-0.56px">4.10.1</span></div></div>
<div class="di" style="left:1823px;top:0px"><svg class="ic"><use href="#appwin"/></svg><div class="lb"><span style="letter-spacing:-0.026px">Third-hand!...</span></div></div>
<div class="di" style="left:1823px;top:83px"><svg class="ic"><use href="#folder"/></svg><div class="lb"><span style="letter-spacing:-0.704px">ROM-FILES</span></div></div>
<div class="di" style="left:1823px;top:166px"><svg class="ic"><use href="#vs"/></svg><svg class="sc"><use href="#sc"/></svg><div class="lb"><span style="letter-spacing:-0.268px">Start</span><br><span style="letter-spacing:-0.284px">Experiment...</span></div></div>
<div class="di" style="left:1823px;top:332px"><svg class="ic"><use href="#folder"/></svg><div class="lb"><span style="letter-spacing:-1.316px">SERVER HSFX</span></div></div>
<div class="di" style="left:1823px;top:415px"><svg class="ic" style="--p:#9aa6a8"><use href="#folderb"/></svg><div class="lb"><span style="letter-spacing:-0.401px">RADIO IL-2</span></div></div>
<div class="di" style="left:1823px;top:498px"><svg class="ic" style="--p:#c8b0a8"><use href="#folderb"/></svg><div class="lb"><span style="letter-spacing:-0.216px">Radio_Tokyo</span></div></div>
<div class="di" style="left:1747px;top:581px"><svg class="ic" style="--p:#5a2a88"><use href="#folderb"/></svg><div class="lb"><span style="letter-spacing:-0.335px">Corel</span></div></div>
<div class="di" style="left:1823px;top:581px"><svg class="ic"><use href="#rar"/></svg><div class="lb"><span style="letter-spacing:-0.008px">Новый</span><br><span style="letter-spacing:-0.059px">Калькулят...</span></div></div>
<div class="di" style="left:1747px;top:747px"><svg class="ic"><use href="#calc"/></svg><svg class="sc"><use href="#sc"/></svg><div class="lb"><span style="letter-spacing:-0.022px">Калькулятор</span></div></div>
<div class="di" style="left:1823px;top:747px"><svg class="ic"><use href="#folder"/></svg><div class="lb"><span style="letter-spacing:-0.073px">Небо для</span><br><span style="letter-spacing:-0.108px">Героя - Ги...</span></div></div>
<div class="di" style="left:1747px;top:830px"><svg class="ic" style="--p:#3a62b8"><use href="#folderb"/></svg><div class="lb"><span style="letter-spacing:-0.433px">CorelDRAW</span><br><span style="letter-spacing:-0.363px">Graphics ...</span></div></div>
<div class="di" style="left:1823px;top:830px"><svg class="ic" style="--p:#b87858"><use href="#folderb"/></svg><div class="lb"><span style="letter-spacing:-0.293px">Тайна</span></div></div>
<div class="di" style="left:1823px;top:913px"><svg class="ic"><use href="#txt"/></svg><div class="lb"><span style="letter-spacing:0.08px">Книга про</span><br><span style="letter-spacing:0.191px">бомбомет...</span></div></div>
<div class="di" style="left:1823px;top:996px"><svg class="ic"><use href="#folder"/></svg><div class="lb"><span style="letter-spacing:-0.396px">IL-2 Server</span><br><span style="letter-spacing:-0.56px">4.13.1</span></div></div>
<div class="abs" style="left:0;top:1078px;width:1920px;height:2px;background:#3b86c0"></div>
<div class="abs" style="left:51px;top:1078px;width:51px;height:2px;background:#c3d9ec"></div>
<div class="abs" style="left:104px;top:1078px;width:5px;height:2px;background:#c3d9ec"></div>
<div class="abs" style="left:113px;top:1078px;width:59px;height:2px;background:#c3d9ec"></div>
<div class="abs" style="left:175px;top:1078px;width:59px;height:2px;background:#c3d9ec"></div>
<div class="abs" style="left:237px;top:1078px;width:59px;height:2px;background:#c3d9ec"></div>
<div class="abs" style="left:300px;top:1078px;width:58px;height:2px;background:#c3d9ec"></div>
<div class="abs" style="left:361px;top:1078px;width:59px;height:2px;background:#f4f8fb"></div>
</div>
<div id="ex" style="border:none;box-shadow:inset 0 0 0 1px #d3d9df">
<div class="abs" style="left:1px;top:0px;width:1104px;height:1px;background:#c9c9c9"></div>
<svg class="abs" style="left:9px;top:6px;width:13px;height:17px"><use href="#fwin"/></svg>
<div class="abs" style="left:30px;top:9px;width:1px;height:12px;background:#9a9a9a"></div>
<svg class="abs" style="left:41px;top:7px;width:16px;height:16px" viewBox="0 0 16 16"><path d="M2.5 1.5h8l3 3v10h-11z" fill="#fff" stroke="#8c8c8c"/><path d="M6 10l2.2 3 5-7.5" fill="none" stroke="#e8643c" stroke-width="2.2"/></svg>
<svg class="abs" style="left:64px;top:6px;width:13px;height:17px"><use href="#fwin"/></svg>
<svg class="abs" style="left:85px;top:12px;width:10px;height:8px" viewBox="0 0 10 8"><path d="M1 .5h7" stroke="#222" stroke-width="1.2"/><path d="M1 3h7l-3.5 4z" fill="#222"/></svg>
<div class="abs" style="left:103px;top:9px;width:1px;height:12px;background:#9a9a9a"></div>
<div class="abs" style="left:277px;top:4px;width:169px;height:28px;background:#fbcdb6"></div>
<div class="t" style="left:211.5px;width:300px;text-align:center;top:11.5px;color:#444;letter-spacing:-0.42px">Средства работы с ярлыками</div>
<div class="abs" style="left:449px;top:4px;width:200px;height:28px;background:#ebc6f2"></div>
<div class="t" style="left:398.5px;width:300px;text-align:center;top:11.5px;color:#444;letter-spacing:-0.42px">Средства работы с приложениями</div>
<div class="t" style="left:675px;width:300px;text-align:center;top:9.5px;font-size:15px;letter-spacing:-0.5px;line-height:18px;color:#3a3a3a;margin-top:-4px">ServerDgen</div>
<div class="abs" style="left:1010px;top:13px;width:8px;height:2px;background:#222"></div>
<div class="abs" style="left:1036px;top:7px;width:10px;height:8px;border:1px solid #222;border-top-width:2px"></div>
<div class="abs" style="left:1054px;top:1px;width:45px;height:20px;background:#bcbcbc"></div>
<svg class="abs" style="left:1071px;top:6px;width:11px;height:11px" viewBox="0 0 11 11"><path d="M1.5 1.5l8 8M9.5 1.5l-8 8" stroke="#fff" stroke-width="1.8"/></svg>
<div class="abs" style="left:8px;top:31px;width:1090px;height:24px;background:#fff"></div>
<div class="abs" style="left:8px;top:31px;width:56px;height:24px;background:#1979ca"></div>
<div class="t" style="left:-114px;width:300px;text-align:center;top:37px;letter-spacing:-0.75px;color:#fff">Файл</div>
<div class="abs" style="left:64px;top:31px;width:70px;height:24px;background:#f5f6f7;border:1px solid #dadbdc;border-bottom:none"></div>
<div class="t" style="left:-51px;width:300px;text-align:center;top:37.5px;letter-spacing:-0.453px;color:#333">Главная</div>
<div class="t" style="left:30px;width:300px;text-align:center;top:37.5px;letter-spacing:-0.376px;color:#333">Поделиться</div>
<div class="t" style="left:100px;width:300px;text-align:center;top:37.5px;letter-spacing:-0.57px;color:#333">Вид</div>
<div class="abs" style="left:277px;top:31px;width:1px;height:18px;background:#e6d5cd"></div>
<div class="abs" style="left:445px;top:31px;width:1px;height:18px;background:#e2d6d2"></div>
<div class="abs" style="left:449px;top:31px;width:1px;height:18px;background:#dcd0e0"></div>
<div class="abs" style="left:648px;top:31px;width:1px;height:18px;background:#dcd0e0"></div>
<div class="t" style="left:210px;width:300px;text-align:center;top:37.5px;letter-spacing:-0.221px;color:#333">Управление</div>
<div class="t" style="left:397px;width:300px;text-align:center;top:37.5px;letter-spacing:-0.221px;color:#333">Управление</div>
<svg class="abs" style="left:1060px;top:39px;width:10px;height:7px" viewBox="0 0 10 7"><path d="M1 5.5l4-4 4 4" fill="none" stroke="#8c8c8c" stroke-width="1.6"/></svg>
<svg class="abs" style="left:1080px;top:35px;width:15px;height:15px" viewBox="0 0 15 15"><circle cx="7.5" cy="7.5" r="7" fill="#1f74d0"/><path d="M5.2 5.6q0-2.4 2.4-2.4 2.4 0 2.4 2.1 0 1.3-1.4 2.1-.9.6-.9 1.6" fill="none" stroke="#fff" stroke-width="1.7"/><circle cx="7.6" cy="11.6" r="1.1" fill="#fff"/></svg>
<div class="abs" style="left:8px;top:54px;width:1090px;height:93px;background:#f5f6f7;border-top:1px solid #dadbdc;border-bottom:1px solid #dadbdc"></div>
<div class="abs" style="left:65px;top:54px;width:68px;height:1px;background:#f5f6f7"></div>
<div class="abs" style="left:264px;top:58px;width:1px;height:84px;background:#e2e3e4"></div>
<div class="abs" style="left:562px;top:58px;width:1px;height:84px;background:#e2e3e4"></div>
<div class="abs" style="left:744px;top:58px;width:1px;height:84px;background:#e2e3e4"></div>
<div class="abs" style="left:891px;top:58px;width:1px;height:84px;background:#e2e3e4"></div>
<div class="abs" style="left:1041px;top:58px;width:1px;height:84px;background:#e2e3e4"></div>
<div class="abs" style="left:416px;top:66px;width:1px;height:50px;background:#e2e3e4"></div>
<svg class="abs" style="left:33px;top:61px;width:30px;height:32px" viewBox="0 0 30 32"><g transform="translate(1,1)"><path d="M1 1h11l4 4v15h-15z" fill="#fdfdfd" stroke="#a9b3bf" stroke-width="1"/><path d="M12 1v4h4" fill="#e8ecf1" stroke="#a9b3bf" stroke-width=".8"/></g><g transform="translate(10,9)"><path d="M1 1h11l4 4v15h-15z" fill="#fdfdfd" stroke="#a9b3bf" stroke-width="1"/><path d="M12 1v4h4" fill="#e8ecf1" stroke="#a9b3bf" stroke-width=".8"/><path d="M3.5 8h9M3.5 10.5h9M3.5 13h9M3.5 15.5h9M3.5 5.5h5" stroke="#3f7fd0" stroke-width="1"/></g></svg>
<div class="t" style="left:-102px;width:300px;text-align:center;top:98px;letter-spacing:-0.061px;">Копировать</div>
<svg class="abs" style="left:96px;top:61px;width:26px;height:32px" viewBox="0 0 26 32"><rect x="1.5" y="3.5" width="23" height="27" rx="1.5" fill="#a9afcf" stroke="#9aa0c4"/><rect x="4" y="7" width="18" height="21" fill="#eef0f8"/><path d="M5 10h16M5 12.5h16M5 15h16M5 17.5h16M5 20h16M5 22.5h16M5 25h16" stroke="#d5d9ec" stroke-width=".8"/><rect x="8" y="1.5" width="10" height="4.5" rx="1" fill="#c9cde2" stroke="#9aa0c4"/></svg>
<div class="t" style="left:-42px;width:300px;text-align:center;top:98px;letter-spacing:-0.608px;color:#9a9a9a">Вставить</div>
<svg class="abs" style="left:139px;top:61px;width:14px;height:18px" viewBox="0 0 14 18"><path d="M4.5 1l4.5 11M9.5 1l-4.5 11" stroke="#6d7f94" stroke-width="1.5"/><circle cx="4" cy="14" r="2.3" fill="none" stroke="#2f86d8" stroke-width="1.5"/><circle cx="10" cy="14" r="2.3" fill="none" stroke="#2f86d8" stroke-width="1.5"/></svg>
<div class="t" style="left:157px;top:64px;letter-spacing:-0.421px;">Вырезать</div>
<svg class="abs" style="left:138px;top:85px;width:17px;height:14px" viewBox="0 0 17 14"><rect x=".5" y=".5" width="16" height="12" rx="1.5" fill="#d6ebff" stroke="#3c8fe0"/><path d="M3 4l1.2 5 1.2-5 1.2 5" fill="none" stroke="#223" stroke-width="1"/><path d="M9 9h1.2M11.2 9h1.2M13.4 9h1.2" stroke="#223" stroke-width="1.2"/></svg>
<div class="t" style="left:157px;top:86px;letter-spacing:-0.14px;">Скопировать путь</div>
<svg class="abs" style="left:139px;top:106px;width:14px;height:16px" viewBox="0 0 14 16"><rect x="1" y="3" width="12" height="12.5" rx="1" fill="#eef0f6" stroke="#a9b0c8" stroke-width="1"/><rect x="4" y="1" width="6" height="3.4" fill="#c9cde0" stroke="#a9b0c8" stroke-width=".8"/><path d="M4 12.5c0-3 1.6-4.4 4-4.5l-.2-1.8 3 2.6-2.6 2.8-.2-1.7c-1.6.1-2.4 1.2-2.2 2.6z" fill="#8d99c6"/></svg>
<div class="t" style="left:157px;top:108px;letter-spacing:-0.345px;color:#9a9a9a">Вставить ярлык</div>
<div class="t" style="left:-15px;width:300px;text-align:center;top:131px;letter-spacing:-0.336px;color:#8b8b8b">Буфер обмена</div>
<svg class="abs" style="left:290px;top:60px;width:34px;height:34px" viewBox="0 0 34 34"><use href="#fwin" x="5" y="2" width="21" height="31"/><path d="M32 22.5h-8v-4l-8.500 7 8.500 7v-4h8z" fill="#2f97e8" stroke="#1467c0" stroke-width=".8"/></svg>
<div class="t" style="left:155px;width:300px;text-align:center;top:98px;letter-spacing:-0.319px;">Переместить</div>
<div class="t" style="left:153px;width:300px;text-align:center;top:111px;letter-spacing:-0.375px;">в</div>
<svg class="abs" style="left:307px;top:115px;width:6px;height:4px" viewBox="0 0 6 4"><path d="M0 0h6l-3 3.5z" fill="#222"/></svg>
<svg class="abs" style="left:361px;top:60px;width:34px;height:34px" viewBox="0 0 34 34"><use href="#fwin" x="2" y="2" width="21" height="31"/><g transform="translate(14,2) scale(.62)"><path d="M1 1h11l4 4v15h-15z" fill="#fdfdfd" stroke="#a9b3bf" stroke-width="1"/><path d="M12 1v4h4" fill="#e8ecf1" stroke="#a9b3bf" stroke-width=".8"/></g><g transform="translate(20,7) scale(.62)"><path d="M1 1h11l4 4v15h-15z" fill="#fdfdfd" stroke="#a9b3bf" stroke-width="1"/><path d="M12 1v4h4" fill="#e8ecf1" stroke="#a9b3bf" stroke-width=".8"/><path d="M3.5 8h9M3.5 11h9M3.5 14h9" stroke="#3f7fd0" stroke-width="1.2"/></g></svg>
<div class="t" style="left:227px;width:300px;text-align:center;top:98px;letter-spacing:-0.061px;">Копировать</div>
<div class="t" style="left:225px;width:300px;text-align:center;top:111px;letter-spacing:-0.375px;">в</div>
<svg class="abs" style="left:379px;top:115px;width:6px;height:4px" viewBox="0 0 6 4"><path d="M0 0h6l-3 3.5z" fill="#222"/></svg>
<svg class="abs" style="left:427px;top:63px;width:30px;height:30px" viewBox="0 0 30 30"><path d="M3 4C9 7 16 15 22 27" stroke="#d8342c" stroke-width="4.2" fill="none" stroke-linecap="round"/><path d="M27 3C18 8 9 18 5 26" stroke="#e0403a" stroke-width="3.6" fill="none" stroke-linecap="round"/></svg>
<div class="t" style="left:292px;width:300px;text-align:center;top:98px;letter-spacing:-0.259px;">Удалить</div>
<svg class="abs" style="left:439px;top:115px;width:6px;height:4px" viewBox="0 0 6 4"><path d="M0 0h6l-3 3.5z" fill="#222"/></svg>
<svg class="abs" style="left:495px;top:62px;width:32px;height:30px" viewBox="0 0 32 30"><rect x="1.5" y="10.5" width="27" height="9" fill="#fff" stroke="#6c8fbf"/><rect x="5" y="12.5" width="14" height="5" fill="#2f86d8"/><path d="M17 4h3.5m3 0h-3v21h3m-6 0h3" fill="none" stroke="#666" stroke-width="1.6"/></svg>
<div class="t" style="left:361px;width:300px;text-align:center;top:98px;letter-spacing:-0.151px;">Переименовать</div>
<div class="t" style="left:262px;width:300px;text-align:center;top:131px;letter-spacing:0.054px;color:#8b8b8b">Упорядочить</div>
<svg class="abs" style="left:579px;top:62px;width:22px;height:31px"><use href="#fwin"/></svg>
<div class="t" style="left:441px;width:300px;text-align:center;top:98px;letter-spacing:-0.371px;">Создать</div>
<div class="t" style="left:441px;width:300px;text-align:center;top:111px;letter-spacing:0.189px;">папку</div>
<svg class="abs" style="left:616px;top:61px;width:18px;height:17px" viewBox="0 0 18 17"><rect x="1" y="1" width="12" height="10" fill="#eaf3fb" stroke="#5a9bd8"/><g transform="translate(6,4) scale(.62)"><path d="M1 1h11l4 4v15h-15z" fill="#fdfdfd" stroke="#a9b3bf" stroke-width="1"/><path d="M12 1v4h4" fill="#e8ecf1" stroke="#a9b3bf" stroke-width=".8"/><path d="M3.5 8h9M3.5 11h9M3.5 14h9" stroke="#8aa0b8" stroke-width="1.2"/></g></svg>
<div class="t" style="left:637px;top:64px;letter-spacing:-0.301px;">Создать элемент</div>
<svg class="abs" style="left:729px;top:68px;width:6px;height:4px" viewBox="0 0 6 4"><path d="M0 0h6l-3 3.5z" fill="#222"/></svg>
<svg class="abs" style="left:616px;top:83px;width:18px;height:17px" viewBox="0 0 18 17"><path d="M1 5h8M3 3h8M5 1h8" stroke="#3f7fd0" stroke-width="1.2"/><g transform="translate(6,4) scale(.62)"><path d="M1 1h11l4 4v15h-15z" fill="#fdfdfd" stroke="#a9b3bf" stroke-width="1"/><path d="M12 1v4h4" fill="#e8ecf1" stroke="#a9b3bf" stroke-width=".8"/></g></svg>
<div class="t" style="left:637px;top:86px;letter-spacing:-0.06px;">Простой доступ</div>
<svg class="abs" style="left:724px;top:90px;width:6px;height:4px" viewBox="0 0 6 4"><path d="M0 0h6l-3 3.5z" fill="#222"/></svg>
<div class="t" style="left:503px;width:300px;text-align:center;top:131px;letter-spacing:-0.371px;color:#8b8b8b">Создать</div>
<svg class="abs" style="left:763px;top:62px;width:30px;height:32px" viewBox="0 0 30 32"><path d="M3 1.5h13l6 6v20h-19z" fill="#fdfdfd" stroke="#9c9c9c"/><path d="M16 1.5v6h6" fill="#eee" stroke="#9c9c9c" stroke-width=".8"/><path d="M10 21l5 7L27 12" fill="none" stroke="#e8703c" stroke-width="3.4"/></svg>
<div class="t" style="left:625px;width:300px;text-align:center;top:98px;letter-spacing:-0.461px;">Свойства</div>
<svg class="abs" style="left:772px;top:115px;width:6px;height:4px" viewBox="0 0 6 4"><path d="M0 0h6l-3 3.5z" fill="#222"/></svg>
<svg class="abs" style="left:805px;top:62px;width:18px;height:15px" viewBox="0 0 18 15"><rect x=".5" y=".5" width="16" height="12" fill="#f4f6f8" stroke="#667"/><rect x=".5" y=".5" width="16" height="2.6" fill="#556"/><rect x="2.5" y="5" width="7" height="6" fill="#3d8f6a"/><path d="M11 6h4M11 8h4M11 10h3" stroke="#889" stroke-width=".9"/></svg>
<div class="t" style="left:825px;top:64px;letter-spacing:-0.161px;">Открыть</div>
<svg class="abs" style="left:874px;top:68px;width:6px;height:4px" viewBox="0 0 6 4"><path d="M0 0h6l-3 3.5z" fill="#222"/></svg>
<svg class="abs" style="left:806px;top:83px;width:16px;height:17px" viewBox="0 0 16 17"><g transform="scale(.78)"><path d="M1 1h11l4 4v15h-15z" fill="#f4f6fb" stroke="#b9bfd6" stroke-width="1"/></g><path d="M4 13l1-3 7-7 2 2-7 7z" fill="#dfe3f2" stroke="#a9b0cc" stroke-width=".9"/></svg>
<div class="t" style="left:825px;top:86px;letter-spacing:-0.141px;color:#9a9a9a">Изменить</div>
<svg class="abs" style="left:805px;top:104px;width:18px;height:18px" viewBox="0 0 18 18"><use href="#fwin" x="0" y="0" width="9" height="12"/><circle cx="10.5" cy="11" r="5.6" fill="#f6f8f6" stroke="#7a8a7a" stroke-width="1"/><path d="M10.5 7.5v3.8h3" fill="none" stroke="#444" stroke-width="1"/><path d="M3 9.5a4.5 4.5 0 0 0 2.5 5.8l-.6 1.8 4-1.6-2.2-3.2-.5 1.5a3 3 0 0 1-1.4-3.8z" fill="#2ea838"/></svg>
<div class="t" style="left:825px;top:108px;letter-spacing:-0.131px;">Журнал</div>
<div class="t" style="left:667px;width:300px;text-align:center;top:131px;letter-spacing:-0.161px;color:#8b8b8b">Открыть</div>
<svg class="abs" style="left:899px;top:62px;width:15px;height:15px" viewBox="0 0 15 15"><g fill="#3c96e8"><rect x="0" y="0" width="6.4" height="6.4"/><rect x="8" y="0" width="6.4" height="6.4"/><rect x="0" y="8" width="6.4" height="6.4"/><rect x="8" y="8" width="6.4" height="6.4"/></g><g fill="#bfe0fb"><rect x="2" y="2" width="2.400" height="2.400"/><rect x="10" y="2" width="2.400" height="2.400"/><rect x="2" y="10" width="2.400" height="2.400"/><rect x="10" y="10" width="2.400" height="2.400"/></g></svg>
<div class="t" style="left:918px;top:64px;letter-spacing:-0.467px;">Выделить все</div>
<svg class="abs" style="left:899px;top:84px;width:15px;height:15px" viewBox="0 0 15 15"><g fill="none" stroke="#9aa0a8" stroke-width="1"><rect x="1" y="1" width="4.4" height="4.4"/><rect x="9" y="1" width="4.4" height="4.4"/><rect x="1" y="9" width="4.4" height="4.4"/><rect x="9" y="9" width="4.4" height="4.4"/></g></svg>
<div class="t" style="left:918px;top:86px;letter-spacing:-0.388px;">Снять выделение</div>
<svg class="abs" style="left:899px;top:106px;width:15px;height:15px" viewBox="0 0 15 15"><g fill="#3c96e8"><rect x="8" y="0" width="6.4" height="6.4"/><rect x="0" y="8" width="6.4" height="6.4"/></g><g fill="#bfe0fb"><rect x="10" y="2" width="2.400" height="2.400"/><rect x="2" y="10" width="2.400" height="2.400"/></g><g fill="none" stroke="#9aa0a8" stroke-width="1"><rect x="1" y="1" width="4.4" height="4.4"/><rect x="9" y="9" width="4.4" height="4.4"/></g></svg>
<div class="t" style="left:918px;top:108px;letter-spacing:-0.307px;">Обратить выделение</div>
<div class="t" style="left:815px;width:300px;text-align:center;top:131px;letter-spacing:-0.42px;color:#8b8b8b">Выделить</div>
<div class="abs" style="left:8px;top:147px;width:1090px;height:878px;background:#fff"></div>
<svg class="abs" style="left:17px;top:154px;width:22px;height:22px" viewBox="0 0 22 22"><circle cx="11" cy="11" r="9.5" fill="none" stroke="#c4c4c4" stroke-width="1.3"/><path d="M16 11H7m3.6-4L6.6 11l4 4" fill="none" stroke="#c4c4c4" stroke-width="1.6"/></svg>
<svg class="abs" style="left:45px;top:154px;width:22px;height:22px" viewBox="0 0 22 22"><circle cx="11" cy="11" r="9.5" fill="none" stroke="#c4c4c4" stroke-width="1.3"/><path d="M6 11h9m-3.6-4l4 4-4 4" fill="none" stroke="#c4c4c4" stroke-width="1.6"/></svg>
<svg class="abs" style="left:78px;top:163px;width:8px;height:5px" viewBox="0 0 8 5"><path d="M0 0h7l-3.5 4z" fill="#cfcfcf"/></svg>
<svg class="abs" style="left:97px;top:157px;width:12px;height:15px" viewBox="0 0 12 15"><path d="M6 14V2M1.5 6.5L6 2l4.500 4.500" fill="none" stroke="#444" stroke-width="1.5"/></svg>
<div class="abs" style="left:115px;top:154px;width:990px;height:22px;border:1px solid #d9d9d9;background:#fff"></div>
<svg class="abs" style="left:121px;top:156px;width:13px;height:17px"><use href="#fwin"/></svg>
<svg class="abs" style="left:142px;top:161px;width:6px;height:8px" viewBox="0 0 6 8"><path d="M.5 0l4 3.800-4 3.800z" fill="#666"/></svg>
<div class="t" style="left:156px;top:158px;letter-spacing:-0.403px;color:#222">ServerDgen</div>
<div class="abs" style="left:259px;top:185px;width:15px;height:815px;background:#f0f0f0"></div>
<svg class="abs" style="left:262px;top:189px;width:9px;height:6px" viewBox="0 0 9 6"><path d="M.8 5l3.700-3.700 3.700 3.700" fill="none" stroke="#555" stroke-width="1.6"/></svg>
<svg class="abs" style="left:262px;top:990px;width:9px;height:6px" viewBox="0 0 9 6"><path d="M.8 1l3.700 3.700 3.700-3.700" fill="none" stroke="#555" stroke-width="1.6"/></svg>
<div class="abs" style="left:259px;top:203px;width:15px;height:110px;background:#c9c9c9"></div>
<svg class="abs" style="left:28px;top:197px;width:17px;height:15px" viewBox="0 0 17 15"><defs><linearGradient id="gdk" x1="0" y1="0" x2="1" y2="1"><stop offset="0" stop-color="#1a46ac"/><stop offset="1" stop-color="#5a9cf0"/></linearGradient></defs><rect x=".5" y=".5" width="15" height="10.500" fill="url(#gdk)" stroke="#7f8ea6"/><rect x="0" y="11.500" width="16" height="2" fill="#3c4654"/></svg>
<div class="t" style="left:49px;top:197px;letter-spacing:-0.11px;color:#1a1a1a">Рабочий стол</div>
<svg class="abs" style="left:38px;top:216px;width:17px;height:16px" viewBox="0 0 17 16"><circle cx="4" cy="8.500" r="3.600" fill="#2a5cc8"/><circle cx="9" cy="4" r="3.400" fill="#3c7ee0"/><circle cx="12" cy="12" r="3.800" fill="#2450c0"/><circle cx="8" cy="8.500" r="4" fill="#2ea044"/><circle cx="7" cy="7.300" r="1.600" fill="#d8f0d8" opacity=".8"/><circle cx="3.200" cy="7.500" r="1.100" fill="#dce8fa" opacity=".8"/><circle cx="11.200" cy="11" r="1.200" fill="#dce8fa" opacity=".7"/><circle cx="8.400" cy="3" r="1.100" fill="#e4eefc" opacity=".8"/></svg>
<div class="t" style="left:59px;top:218px;letter-spacing:0.132px;color:#1a1a1a">Домашняя группа</div>
<svg class="abs" style="left:38px;top:236px;width:17px;height:17px" viewBox="0 0 17 17"><use href="#fwin" x="0" y="0" width="12" height="16"/><circle cx="10" cy="7" r="2.600" fill="#b8845c"/><path d="M5.500 15q.5-5 4.500-5t4.500 5z" fill="#5fa088"/></svg>
<div class="t" style="left:59px;top:239px;letter-spacing:-0.115px;color:#1a1a1a">Александр</div>
<svg class="abs" style="left:37px;top:258px;width:19px;height:16px" viewBox="0 0 19 16"><rect x="4.500" y=".5" width="13" height="9.500" fill="#e8ecf2" stroke="#8a96a8"/><rect x="6" y="2" width="10" height="6.500" fill="#2448c8"/><rect x="1" y="5" width="3" height="8" fill="#d5dae2" stroke="#8a96a8" stroke-width=".6"/><path d="M7 13h9l1 1.500h-11z" fill="#c8ced6"/></svg>
<div class="t" style="left:59px;top:260px;letter-spacing:0.02px;color:#1a1a1a">Этот компьютер</div>
<svg class="abs" style="left:49px;top:278px;width:17px;height:17px" viewBox="0 0 17 17"><use href="#fwin" x="0" y="0" width="12" height="16"/><rect x="6" y="5" width="9" height="10" fill="#334"/><rect x="8" y="6.500" width="5" height="7" fill="#7aa2c8"/></svg>
<div class="t" style="left:69px;top:281px;letter-spacing:-0.411px;color:#1a1a1a">Видео</div>
<svg class="abs" style="left:49px;top:299px;width:17px;height:17px" viewBox="0 0 17 17"><use href="#fwin" x="0" y="0" width="12" height="16"/><rect x="6.500" y="4" width="8" height="11" fill="#f4f6fa" stroke="#9aa6b8" stroke-width=".7"/><path d="M8 7h5M8 9.500h5M8 12h5" stroke="#6a8ac8" stroke-width=".8"/></svg>
<div class="t" style="left:69px;top:302px;letter-spacing:0.016px;color:#1a1a1a">Документы</div>
<div class="abs" style="left:9px;top:655px;width:250px;height:345px;overflow:hidden">
<svg class="abs" style="left:29px;top:2px;width:13px;height:17px"><use href="#fwin"/></svg><div class="t" style="left:50px;top:4px;letter-spacing:0.102px;color:#1a1a1a">Audio</div>
<svg class="abs" style="left:29px;top:23px;width:13px;height:17px"><use href="#fwin"/></svg><div class="t" style="left:50px;top:25px;letter-spacing:-0.957px;color:#1a1a1a">BBC-FILES</div>
<svg class="abs" style="left:29px;top:44px;width:13px;height:17px"><use href="#fwin"/></svg><div class="t" style="left:50px;top:46px;letter-spacing:-0.25px;color:#1a1a1a">BBC-radio</div>
<svg class="abs" style="left:29px;top:65px;width:13px;height:17px"><use href="#fwin"/></svg><div class="t" style="left:50px;top:67px;letter-spacing:-0.098px;color:#1a1a1a">Calculation of delay for IL-2 v.4.13.2</div>
<svg class="abs" style="left:29px;top:86px;width:13px;height:17px"><use href="#fwin"/></svg><div class="t" style="left:50px;top:88px;letter-spacing:-0.122px;color:#1a1a1a">CATALINA skins</div>
<svg class="abs" style="left:29px;top:107px;width:13px;height:17px"><use href="#fwin"/></svg><div class="t" style="left:50px;top:109px;letter-spacing:-0.215px;color:#1a1a1a">Corel</div>
<svg class="abs" style="left:29px;top:128px;width:13px;height:17px"><use href="#fwin"/></svg><div class="t" style="left:50px;top:130px;letter-spacing:-0.365px;color:#1a1a1a">CorelDRAW Graphics Suite X8 18.1.0.6</div>
<svg class="abs" style="left:29px;top:149px;width:13px;height:17px"><use href="#fwin"/></svg><div class="t" style="left:50px;top:151px;letter-spacing:-0.8px;color:#1a1a1a">DTAR_08E86330_4835_4B5C_9E5A_61F</div>
<svg class="abs" style="left:29px;top:170px;width:13px;height:17px"><use href="#fwin"/></svg><div class="t" style="left:50px;top:172px;letter-spacing:-0.977px;color:#1a1a1a">EKIPAJ</div>
<svg class="abs" style="left:29px;top:191px;width:13px;height:17px"><use href="#fwin"/></svg><div class="t" style="left:50px;top:193px;letter-spacing:-1.02px;color:#1a1a1a">FBDj_2_0_7</div>
<svg class="abs" style="left:29px;top:212px;width:13px;height:17px"><use href="#fwin"/></svg><div class="t" style="left:50px;top:214px;letter-spacing:-1.231px;color:#1a1a1a">FREETRACK</div>
<svg class="abs" style="left:29px;top:233px;width:13px;height:17px"><use href="#fwin"/></svg><div class="t" style="left:50px;top:235px;letter-spacing:-0.032px;color:#1a1a1a">Full Throttle Mod for 4.13</div>
<svg class="abs" style="left:29px;top:254px;width:13px;height:17px"><use href="#fwin"/></svg><div class="t" style="left:50px;top:256px;letter-spacing:0.103px;color:#1a1a1a">german-radio</div>
<svg class="abs" style="left:29px;top:275px;width:13px;height:17px"><use href="#fwin"/></svg><div class="t" style="left:50px;top:277px;letter-spacing:-0.215px;color:#1a1a1a">Grossdeutscher_Rundfunk</div>
<svg class="abs" style="left:29px;top:296px;width:13px;height:17px"><use href="#fwin"/></svg><div class="t" style="left:50px;top:298px;letter-spacing:-0.445px;color:#1a1a1a">IcoFX v2.7</div>
<svg class="abs" style="left:40px;top:317px;width:13px;height:17px"><use href="#fwin"/></svg><div class="t" style="left:61px;top:319px;letter-spacing:-0.49px;color:#1a1a1a">rus</div>
<svg class="abs" style="left:29px;top:338px;width:13px;height:17px"><use href="#fwin"/></svg><div class="t" style="left:50px;top:340px;letter-spacing:-0.447px;color:#1a1a1a">IL-2 Server 4.13.1</div>
</div>
<div class="t" style="left:295px;top:190.5px;letter-spacing:0.209px;color:#5a6b85">Имя</div>
<svg class="abs" style="left:414px;top:184px;width:9px;height:5px" viewBox="0 0 9 5"><path d="M.5 4.500l4-4 4 4z" fill="#6a8ec8"/></svg>
<div class="abs" style="left:292px;top:236px;width:813px;height:21px;background:#f2f2f2;border:1px solid #e4e4e4"></div>
<svg class="abs" style="left:295px;top:217px;width:17px;height:16px" viewBox="0 0 17 16"><rect x=".5" y=".5" width="15" height="12" fill="#fdfdfd" stroke="#8a96a8"/><rect x=".5" y=".5" width="15" height="2.500" fill="#3a5a98"/></svg>
<svg class="abs" style="left:295px;top:225px;width:9px;height:9px" viewBox="0 0 9 9"><rect x=".5" y=".5" width="8" height="8" fill="#fff" stroke="#888"/><path d="M2 7c0-2.400 1.400-3.600 3.200-3.600v-1.400l2.300 2.200-2.300 2.200v-1.400c-1.200 0-2 .6-1.800 2z" fill="#1d4fa3"/></svg>
<div class="t" style="left:316px;top:219px;letter-spacing:-0.363px;color:#1a1a1a">FBDj.exe - Ярлык</div>
<svg class="abs" style="left:295px;top:238px;width:17px;height:16px" viewBox="0 0 17 16"><rect x="0" y="0" width="16" height="16" fill="#6a86a8"/><path d="M0 0h16v6h-16z" fill="#8a6a4c"/><path d="M2 12l12-8" stroke="#cfd8e2" stroke-width="2"/><path d="M9 2l5 5" stroke="#c84a30" stroke-width="2"/></svg>
<svg class="abs" style="left:295px;top:246px;width:9px;height:9px" viewBox="0 0 9 9"><rect x=".5" y=".5" width="8" height="8" fill="#fff" stroke="#888"/><path d="M2 7c0-2.400 1.400-3.600 3.200-3.600v-1.400l2.300 2.200-2.300 2.200v-1.400c-1.200 0-2 .6-1.800 2z" fill="#1d4fa3"/></svg>
<div class="t" style="left:316px;top:240px;letter-spacing:-0.23px;color:#1a1a1a">il2server.exe - Ярлык</div>
<svg class="abs" style="left:296px;top:259px;width:13px;height:16px"><use href="#fwin"/></svg>
<svg class="abs" style="left:295px;top:267px;width:9px;height:9px" viewBox="0 0 9 9"><rect x=".5" y=".5" width="8" height="8" fill="#fff" stroke="#888"/><path d="M2 7c0-2.400 1.400-3.600 3.200-3.600v-1.400l2.300 2.200-2.300 2.200v-1.400c-1.200 0-2 .6-1.800 2z" fill="#1d4fa3"/></svg>
<div class="t" style="left:316px;top:261px;letter-spacing:-0.25px;color:#1a1a1a">ServerDgen - Ярлык</div>
<div class="t" style="left:22px;top:1006.5px;letter-spacing:-0.267px;color:#2b3a55">Элементов: 3</div>
<div class="abs" style="left:103px;top:1006px;width:1px;height:15px;background:#e6e6e6"></div>
<div class="t" style="left:115px;top:1006.5px;letter-spacing:-0.303px;color:#2b3a55">Выбран 1 элемент: 527 байт</div>
<div class="abs" style="left:288px;top:1006px;width:1px;height:15px;background:#e6e6e6"></div>
<div class="abs" style="left:1050px;top:1002px;width:22px;height:23px;background:#cbe6f7;border:1px solid #4a9ace"></div>
<svg class="abs" style="left:1054px;top:1007px;width:15px;height:14px" viewBox="0 0 15 14"><g fill="#fff" stroke="#556" stroke-width=".8"><rect x=".5" y="1.500" width="2.500" height="2.500"/><rect x=".5" y="5.500" width="2.500" height="2.500"/><rect x=".5" y="9.500" width="2.500" height="2.500"/></g><path d="M5 2.800h3.500M10 2.800h3.500M5 6.800h3.500M10 6.800h3.500M5 10.800h3.500M10 10.800h3.500" stroke="#445" stroke-width="1.100"/></svg>
<svg class="abs" style="left:1076px;top:1006px;width:15px;height:13px" viewBox="0 0 15 13"><rect x=".5" y=".5" width="13" height="10.500" fill="#fff" stroke="#778"/><rect x="2" y="2" width="10" height="7.500" fill="#2a7a8c"/><path d="M2 9.500l3.500-4 3 2.500 3.500-1.500v3z" fill="#1c4038"/><rect x="2" y="2" width="10" height="3" fill="#bfe0f4"/></svg>
</div>
<div id="fb" style="border:none;box-shadow:inset 0 0 0 1px #cdcdcd">
<svg class="abs" style="left:10px;top:10.5px;width:17px;height:10px" viewBox="0 0 17 10"><defs><linearGradient id="gfi" x1="0" y1="0" x2="0" y2="1"><stop offset="0" stop-color="#3494d6"/><stop offset="1" stop-color="#a6d6f0"/></linearGradient></defs><rect width="16" height="9" y=".5" fill="url(#gfi)"/><path d="M2 5q3-3 6-1t6-1" stroke="#16324a" stroke-width="1.600" fill="none"/></svg>
<div class="t" style="left:277px;width:300px;text-align:center;top:9.5px;font-size:15px;line-height:18px;letter-spacing:0;color:#3a3a3a;margin-top:-3px">FBDj-Default</div>
<div class="abs" style="left:761px;top:13px;width:8px;height:2px;background:#222"></div>
<div class="abs" style="left:787px;top:7px;width:10px;height:8px;border:1px solid #222;border-top-width:2px"></div>
<div class="abs" style="left:805px;top:1px;width:45px;height:20px;background:#bcbcbc"></div>
<svg class="abs" style="left:822px;top:6px;width:11px;height:11px" viewBox="0 0 11 11"><path d="M1.500 1.500l8 8M9.500 1.500l-8 8" stroke="#fff" stroke-width="1.800"/></svg>
<div class="abs" style="left:8px;top:30px;width:842px;height:646px;background:#f0f0f0;border:1px solid #e6e6e6"></div>
<div class="abs" style="left:9px;top:31px;width:840px;height:20px;background:linear-gradient(#fcfcfc,#f2f2f2);border-bottom:1px solid #9c9c9c"></div>
<div class="t" style="left:13px;top:34.5px;font-size:12px;letter-spacing:-0.3px;color:#444">File</div>
<div class="t" style="left:40px;top:34.5px;font-size:12px;letter-spacing:-0.2px;color:#444">Help</div>
<div class="abs" style="left:20px;top:66px;width:79px;height:19px;background:linear-gradient(#f4f4f4,#e9e9e9);border:1px solid #a9a9a9;border-bottom:none"></div>
<div class="t" style="left:-90.5px;width:300px;text-align:center;top:69.5px;letter-spacing:-0.252px;">Mission Status</div>
<div class="abs" style="left:100px;top:66px;width:35px;height:19px;background:linear-gradient(#f4f4f4,#e9e9e9);border:1px solid #a9a9a9;border-bottom:none"></div>
<div class="t" style="left:-32.5px;width:300px;text-align:center;top:69.5px;letter-spacing:-0.316px;">Pilots</div>
<div class="abs" style="left:136px;top:66px;width:44px;height:19px;background:linear-gradient(#f4f4f4,#e9e9e9);border:1px solid #a9a9a9;border-bottom:none"></div>
<div class="t" style="left:8.0px;width:300px;text-align:center;top:69.5px;letter-spacing:-0.446px;">Admins</div>
<div class="abs" style="left:181px;top:66px;width:91px;height:19px;background:linear-gradient(#f4f4f4,#e9e9e9);border:1px solid #a9a9a9;border-bottom:none"></div>
<div class="t" style="left:76.5px;width:300px;text-align:center;top:69.5px;letter-spacing:-0.355px;">Reserved Names</div>
<div class="abs" style="left:273px;top:66px;width:47px;height:19px;background:linear-gradient(#f4f4f4,#e9e9e9);border:1px solid #a9a9a9;border-bottom:none"></div>
<div class="t" style="left:146.5px;width:300px;text-align:center;top:69.5px;letter-spacing:-0.343px;">Ban List</div>
<div class="abs" style="left:321px;top:66px;width:40px;height:19px;background:linear-gradient(#f4f4f4,#e9e9e9);border:1px solid #a9a9a9;border-bottom:none"></div>
<div class="t" style="left:191.0px;width:300px;text-align:center;top:69.5px;letter-spacing:-0.133px;">Config</div>
<div class="abs" style="left:434px;top:66px;width:78px;height:19px;background:linear-gradient(#f4f4f4,#e9e9e9);border:1px solid #a9a9a9;border-bottom:none"></div>
<div class="t" style="left:323.0px;width:300px;text-align:center;top:69.5px;letter-spacing:-0.372px;">Mission Builder</div>
<div class="abs" style="left:513px;top:66px;width:81px;height:19px;background:linear-gradient(#f4f4f4,#e9e9e9);border:1px solid #a9a9a9;border-bottom:none"></div>
<div class="t" style="left:403.5px;width:300px;text-align:center;top:69.5px;letter-spacing:-0.156px;">Warning Points</div>
<div class="abs" style="left:18px;top:84px;width:805px;height:505px;background:#f0f0f0;border:1px solid #9a9a9a;border-top-color:#a9a9a9;border-left-color:#a9a9a9;box-shadow:inset 2px 3px 0 #fdfdfd, inset -1px -1px 0 #d6d6d6"></div>
<div class="abs" style="left:361px;top:64px;width:73px;height:23px;background:#fdfdfd;border:1px solid #a9a9a9;border-bottom:none"></div>
<div class="t" style="left:247px;width:300px;text-align:center;top:68px;letter-spacing:-0.483px;">MissionCycle</div>
<div class="abs" style="left:32px;top:105px;width:336px;height:430px;border:1px solid #dcdcdc;box-shadow:inset 1px 1px 0 #fff, 1px 1px 0 #fff"></div>
<div class="t" style="left:37px;top:99px;letter-spacing:-0.35px;background:#f0f0f0;padding:0 2px 0 1px">Available Mission Files</div>
<div class="abs" style="left:36px;top:115px;width:311px;height:22px;background:#fcfcfc"></div>
<div class="abs" style="left:170px;top:115px;width:2px;height:22px;background:#ececec"></div>
<div class="abs" style="left:214px;top:115px;width:2px;height:22px;background:#ececec"></div>
<div class="abs" style="left:255px;top:115px;width:2px;height:22px;background:#ececec"></div>
<div class="abs" style="left:301px;top:115px;width:2px;height:22px;background:#ececec"></div>
<div class="t" style="left:40px;top:121px;letter-spacing:-0.585px;">Name</div>
<div class="t" style="left:176px;top:121px;letter-spacing:-0.191px;">Dire...</div>
<div class="t" style="left:220px;top:121px;letter-spacing:0.011px;">Diffi...</div>
<div class="t" style="left:261px;top:121px;letter-spacing:-0.2px;">Red ...</div>
<div class="t" style="left:307px;top:121px;letter-spacing:-0.28px;">Blue ...</div>
<div class="abs" style="left:36px;top:139px;width:311px;height:392px;overflow:hidden;background:#00ffff">
<div class="abs" style="left:0;top:15px;width:311px;height:1px;background:#3c9c9c"></div><div class="t" style="left:1px;top:1px;letter-spacing:-0.117px;">1</div><div class="t" style="left:136px;top:1px;letter-spacing:-0.3px;">FBDj\</div><div class="t" style="left:180px;top:1px;letter-spacing:0.021px;">Default</div><div class="t" style="left:221px;top:1px;letter-spacing:-0.324px;">None</div><div class="t" style="left:267px;top:1px;letter-spacing:-0.324px;">None</div>
<div class="abs" style="left:0;top:31px;width:311px;height:1px;background:#3c9c9c"></div><div class="t" style="left:1px;top:17px;letter-spacing:-0.067px;">1945-1946</div><div class="t" style="left:136px;top:17px;letter-spacing:-0.3px;">FBDj\</div><div class="t" style="left:180px;top:17px;letter-spacing:0.021px;">Default</div><div class="t" style="left:221px;top:17px;letter-spacing:-0.324px;">None</div><div class="t" style="left:267px;top:17px;letter-spacing:-0.324px;">None</div>
<div class="abs" style="left:0;top:47px;width:311px;height:1px;background:#3c9c9c"></div><div class="t" style="left:1px;top:33px;letter-spacing:-0.02px;">Africa</div><div class="t" style="left:136px;top:33px;letter-spacing:-0.3px;">FBDj\</div><div class="t" style="left:180px;top:33px;letter-spacing:0.021px;">Default</div><div class="t" style="left:221px;top:33px;letter-spacing:-0.324px;">None</div><div class="t" style="left:267px;top:33px;letter-spacing:-0.324px;">None</div>
<div class="abs" style="left:0;top:63px;width:311px;height:1px;background:#3c9c9c"></div><div class="t" style="left:1px;top:49px;letter-spacing:-0.244px;">Africa-NEW</div><div class="t" style="left:136px;top:49px;letter-spacing:-0.3px;">FBDj\</div><div class="t" style="left:180px;top:49px;letter-spacing:0.021px;">Default</div><div class="t" style="left:221px;top:49px;letter-spacing:-0.324px;">None</div><div class="t" style="left:267px;top:49px;letter-spacing:-0.324px;">None</div>
<div class="abs" style="left:0;top:79px;width:311px;height:1px;background:#3c9c9c"></div><div class="t" style="left:1px;top:65px;letter-spacing:-0.082px;">Balaton-1-45</div><div class="t" style="left:136px;top:65px;letter-spacing:-0.3px;">FBDj\</div><div class="t" style="left:180px;top:65px;letter-spacing:0.021px;">Default</div><div class="t" style="left:221px;top:65px;letter-spacing:-0.324px;">None</div><div class="t" style="left:267px;top:65px;letter-spacing:-0.324px;">None</div>
<div class="abs" style="left:0;top:95px;width:311px;height:1px;background:#3c9c9c"></div><div class="t" style="left:1px;top:81px;letter-spacing:-0.082px;">Balaton-2-44</div><div class="t" style="left:136px;top:81px;letter-spacing:-0.3px;">FBDj\</div><div class="t" style="left:180px;top:81px;letter-spacing:0.021px;">Default</div><div class="t" style="left:221px;top:81px;letter-spacing:-0.324px;">None</div><div class="t" style="left:267px;top:81px;letter-spacing:-0.324px;">None</div>
<div class="abs" style="left:0;top:111px;width:311px;height:1px;background:#3c9c9c"></div><div class="t" style="left:1px;top:97px;letter-spacing:-0.207px;">Balaton-2-44-NEW</div><div class="t" style="left:136px;top:97px;letter-spacing:-0.3px;">FBDj\</div><div class="t" style="left:180px;top:97px;letter-spacing:0.021px;">Default</div><div class="t" style="left:221px;top:97px;letter-spacing:-0.324px;">None</div><div class="t" style="left:267px;top:97px;letter-spacing:-0.324px;">None</div>
<div class="abs" style="left:0;top:127px;width:311px;height:1px;background:#3c9c9c"></div><div class="t" style="left:1px;top:113px;letter-spacing:-0.164px;">Berlin-1-45</div><div class="t" style="left:136px;top:113px;letter-spacing:-0.3px;">FBDj\</div><div class="t" style="left:180px;top:113px;letter-spacing:0.021px;">Default</div><div class="t" style="left:221px;top:113px;letter-spacing:-0.324px;">None</div><div class="t" style="left:267px;top:113px;letter-spacing:-0.324px;">None</div>
<div class="abs" style="left:0;top:143px;width:311px;height:1px;background:#3c9c9c"></div><div class="t" style="left:1px;top:129px;letter-spacing:-0.164px;">Berlin-2-45</div><div class="t" style="left:136px;top:129px;letter-spacing:-0.3px;">FBDj\</div><div class="t" style="left:180px;top:129px;letter-spacing:0.021px;">Default</div><div class="t" style="left:221px;top:129px;letter-spacing:-0.324px;">None</div><div class="t" style="left:267px;top:129px;letter-spacing:-0.324px;">None</div>
<div class="abs" style="left:0;top:159px;width:311px;height:1px;background:#3c9c9c"></div><div class="t" style="left:1px;top:145px;letter-spacing:-0.164px;">Berlin-3-45</div><div class="t" style="left:136px;top:145px;letter-spacing:-0.3px;">FBDj\</div><div class="t" style="left:180px;top:145px;letter-spacing:0.021px;">Default</div><div class="t" style="left:221px;top:145px;letter-spacing:-0.324px;">None</div><div class="t" style="left:267px;top:145px;letter-spacing:-0.324px;">None</div>
<div class="abs" style="left:0;top:175px;width:311px;height:1px;background:#3c9c9c"></div><div class="t" style="left:1px;top:161px;letter-spacing:-0.168px;">Britain</div><div class="t" style="left:136px;top:161px;letter-spacing:-0.3px;">FBDj\</div><div class="t" style="left:180px;top:161px;letter-spacing:0.021px;">Default</div><div class="t" style="left:221px;top:161px;letter-spacing:-0.324px;">None</div><div class="t" style="left:267px;top:161px;letter-spacing:-0.324px;">None</div>
<div class="abs" style="left:0;top:191px;width:311px;height:1px;background:#3c9c9c"></div><div class="t" style="left:1px;top:177px;letter-spacing:-0.408px;">Crimea</div><div class="t" style="left:136px;top:177px;letter-spacing:-0.3px;">FBDj\</div><div class="t" style="left:180px;top:177px;letter-spacing:0.021px;">Default</div><div class="t" style="left:221px;top:177px;letter-spacing:-0.324px;">None</div><div class="t" style="left:267px;top:177px;letter-spacing:-0.324px;">None</div>
<div class="abs" style="left:0;top:207px;width:311px;height:1px;background:#3c9c9c"></div><div class="t" style="left:1px;top:193px;letter-spacing:-0.098px;">Crimea in the fire-v413</div><div class="t" style="left:136px;top:193px;letter-spacing:-0.3px;">FBDj\</div><div class="t" style="left:180px;top:193px;letter-spacing:0.021px;">Default</div><div class="t" style="left:221px;top:193px;letter-spacing:-0.324px;">None</div><div class="t" style="left:267px;top:193px;letter-spacing:-0.324px;">None</div>
<div class="abs" style="left:0;top:223px;width:311px;height:1px;background:#3c9c9c"></div><div class="t" style="left:1px;top:209px;letter-spacing:-0.274px;">Crimea-1m-42</div><div class="t" style="left:136px;top:209px;letter-spacing:-0.3px;">FBDj\</div><div class="t" style="left:180px;top:209px;letter-spacing:0.021px;">Default</div><div class="t" style="left:221px;top:209px;letter-spacing:-0.324px;">None</div><div class="t" style="left:267px;top:209px;letter-spacing:-0.324px;">None</div>
<div class="abs" style="left:0;top:239px;width:311px;height:1px;background:#3c9c9c"></div><div class="t" style="left:1px;top:225px;letter-spacing:-0.193px;">Crimea-2-42</div><div class="t" style="left:136px;top:225px;letter-spacing:-0.3px;">FBDj\</div><div class="t" style="left:180px;top:225px;letter-spacing:0.021px;">Default</div><div class="t" style="left:221px;top:225px;letter-spacing:-0.324px;">None</div><div class="t" style="left:267px;top:225px;letter-spacing:-0.324px;">None</div>
<div class="abs" style="left:0;top:255px;width:311px;height:1px;background:#3c9c9c"></div><div class="t" style="left:1px;top:241px;letter-spacing:-0.203px;">Far_East</div><div class="t" style="left:136px;top:241px;letter-spacing:-0.3px;">FBDj\</div><div class="t" style="left:180px;top:241px;letter-spacing:0.021px;">Default</div><div class="t" style="left:221px;top:241px;letter-spacing:-0.324px;">None</div><div class="t" style="left:267px;top:241px;letter-spacing:-0.324px;">None</div>
<div class="abs" style="left:0;top:271px;width:311px;height:1px;background:#3c9c9c"></div><div class="t" style="left:1px;top:257px;letter-spacing:-0.251px;">Fiordi</div><div class="t" style="left:136px;top:257px;letter-spacing:-0.3px;">FBDj\</div><div class="t" style="left:180px;top:257px;letter-spacing:0.021px;">Default</div><div class="t" style="left:221px;top:257px;letter-spacing:-0.324px;">None</div><div class="t" style="left:267px;top:257px;letter-spacing:-0.324px;">None</div>
<div class="abs" style="left:0;top:287px;width:311px;height:1px;background:#3c9c9c"></div><div class="t" style="left:1px;top:273px;letter-spacing:-0.122px;">Islands</div><div class="t" style="left:136px;top:273px;letter-spacing:-0.3px;">FBDj\</div><div class="t" style="left:180px;top:273px;letter-spacing:0.021px;">Default</div><div class="t" style="left:221px;top:273px;letter-spacing:-0.324px;">None</div><div class="t" style="left:267px;top:273px;letter-spacing:-0.324px;">None</div>
<div class="abs" style="left:0;top:303px;width:311px;height:1px;background:#3c9c9c"></div><div class="t" style="left:1px;top:289px;letter-spacing:-0.044px;">Islands-1-43</div><div class="t" style="left:136px;top:289px;letter-spacing:-0.3px;">FBDj\</div><div class="t" style="left:180px;top:289px;letter-spacing:0.021px;">Default</div><div class="t" style="left:221px;top:289px;letter-spacing:-0.324px;">None</div><div class="t" style="left:267px;top:289px;letter-spacing:-0.324px;">None</div>
<div class="abs" style="left:0;top:319px;width:311px;height:1px;background:#3c9c9c"></div><div class="t" style="left:1px;top:305px;letter-spacing:-0.134px;">Iwo_JIma</div><div class="t" style="left:136px;top:305px;letter-spacing:-0.3px;">FBDj\</div><div class="t" style="left:180px;top:305px;letter-spacing:0.021px;">Default</div><div class="t" style="left:221px;top:305px;letter-spacing:-0.324px;">None</div><div class="t" style="left:267px;top:305px;letter-spacing:-0.324px;">None</div>
<div class="abs" style="left:0;top:335px;width:311px;height:1px;background:#3c9c9c"></div><div class="t" style="left:1px;top:321px;letter-spacing:-0.326px;">Kavkaz-1m-43</div><div class="t" style="left:136px;top:321px;letter-spacing:-0.3px;">FBDj\</div><div class="t" style="left:180px;top:321px;letter-spacing:0.021px;">Default</div><div class="t" style="left:221px;top:321px;letter-spacing:-0.324px;">None</div><div class="t" style="left:267px;top:321px;letter-spacing:-0.324px;">None</div>
<div class="abs" style="left:0;top:351px;width:311px;height:1px;background:#3c9c9c"></div><div class="t" style="left:1px;top:337px;letter-spacing:-0.326px;">Kavkaz-2m-42</div><div class="t" style="left:136px;top:337px;letter-spacing:-0.3px;">FBDj\</div><div class="t" style="left:180px;top:337px;letter-spacing:0.021px;">Default</div><div class="t" style="left:221px;top:337px;letter-spacing:-0.324px;">None</div><div class="t" style="left:267px;top:337px;letter-spacing:-0.324px;">None</div>
<div class="abs" style="left:0;top:367px;width:311px;height:1px;background:#3c9c9c"></div><div class="t" style="left:1px;top:353px;letter-spacing:-0.483px;">KhalkhinGol</div><div class="t" style="left:136px;top:353px;letter-spacing:-0.3px;">FBDj\</div><div class="t" style="left:180px;top:353px;letter-spacing:0.021px;">Default</div><div class="t" style="left:221px;top:353px;letter-spacing:-0.324px;">None</div><div class="t" style="left:267px;top:353px;letter-spacing:-0.324px;">None</div>
<div class="abs" style="left:0;top:383px;width:311px;height:1px;background:#3c9c9c"></div><div class="t" style="left:1px;top:369px;letter-spacing:-0.6px;">Kiev</div><div class="t" style="left:136px;top:369px;letter-spacing:-0.3px;">FBDj\</div><div class="t" style="left:180px;top:369px;letter-spacing:0.021px;">Default</div><div class="t" style="left:221px;top:369px;letter-spacing:-0.324px;">None</div><div class="t" style="left:267px;top:369px;letter-spacing:-0.324px;">None</div>
<div class="abs" style="left:0;top:399px;width:311px;height:1px;background:#3c9c9c"></div><div class="t" style="left:1px;top:385px;letter-spacing:-0.324px;">Kiev-1m-41</div><div class="t" style="left:136px;top:385px;letter-spacing:-0.3px;">FBDj\</div><div class="t" style="left:180px;top:385px;letter-spacing:0.021px;">Default</div><div class="t" style="left:221px;top:385px;letter-spacing:-0.324px;">None</div><div class="t" style="left:267px;top:385px;letter-spacing:-0.324px;">None</div>
<div class="abs" style="left:134px;top:0;width:1px;height:394px;background:#3c9c9c"></div><div class="abs" style="left:178px;top:0;width:1px;height:394px;background:#3c9c9c"></div><div class="abs" style="left:219px;top:0;width:1px;height:394px;background:#3c9c9c"></div><div class="abs" style="left:265px;top:0;width:1px;height:394px;background:#3c9c9c"></div><div class="abs" style="left:310px;top:0;width:1px;height:394px;background:#3c9c9c"></div></div>
<div class="abs" style="left:348px;top:139px;width:16px;height:393px;background:#f0f0f0"></div>
<svg class="abs" style="left:351px;top:145px;width:9px;height:6px" viewBox="0 0 9 6"><path d="M.8 5l3.700-3.700 3.700 3.700" fill="none" stroke="#505050" stroke-width="1.700"/></svg>
<svg class="abs" style="left:351px;top:521px;width:9px;height:6px" viewBox="0 0 9 6"><path d="M.8 1l3.700 3.700 3.700-3.700" fill="none" stroke="#505050" stroke-width="1.700"/></svg>
<div class="abs" style="left:348px;top:156px;width:15px;height:115px;background:#cdcdcd"></div>
<div class="abs" style="left:376px;top:109px;width:23px;height:23px;background:#fafafa;border:1px solid #adadad;box-shadow:inset 0 0 0 1px #f0f0f0"></div>
<svg class="abs" style="left:378px;top:111px;width:19px;height:19px" viewBox="0 0 19 19"><path d="M9.500 .5v18M.5 9.500h18" stroke="#1f9a38" stroke-width="5"/><path d="M9.500 1.300v16.400M1.300 9.500h16.400" stroke="#2fb84a" stroke-width="3.400"/></svg>
<div class="abs" style="left:376px;top:139px;width:23px;height:23px;background:#fafafa;border:1px solid #adadad;box-shadow:inset 0 0 0 1px #f0f0f0"></div>
<svg class="abs" style="left:378px;top:141px;width:19px;height:19px" viewBox="0 0 19 19"><path d="M1.500 1.500l16 16M17.500 1.500l-16 16" stroke="#e01820" stroke-width="4.200"/></svg>
<div class="abs" style="left:376px;top:284px;width:23px;height:23px;background:#fafafa;border:1px solid #adadad;box-shadow:inset 0 0 0 1px #f0f0f0"></div>
<svg class="abs" style="left:378px;top:286px;width:19px;height:19px" viewBox="0 0 19 19"><path d="M1 6.500h7.500v-5.500l9.500 8.500-9.500 8.500v-5.500h-7.500z" fill="#6c8486"/></svg>
<div class="abs" style="left:417px;top:105px;width:146px;height:66px;border:1px solid #dcdcdc;box-shadow:inset 1px 1px 0 #fff, 1px 1px 0 #fff"></div>
<div class="t" style="left:422px;top:99px;letter-spacing:-0.39px;background:#f0f0f0;padding:0 2px 0 1px">Mission Cycle List</div>
<div class="abs" style="left:421px;top:114px;width:138px;height:52px;background:#fff"></div>
<div class="abs" style="left:421px;top:114px;width:138px;height:16px;background:#3399ff"></div>
<div class="t" style="left:421px;top:116px;letter-spacing:0.021px;color:#fff">Default</div>
<div class="abs" style="left:571px;top:109px;width:23px;height:23px;background:#fafafa;border:1px solid #adadad;box-shadow:inset 0 0 0 1px #f0f0f0"></div>
<svg class="abs" style="left:573px;top:111px;width:19px;height:19px" viewBox="0 0 19 19"><path d="M9.500 .5v18M.5 9.500h18" stroke="#1f9a38" stroke-width="5"/><path d="M9.500 1.300v16.400M1.300 9.500h16.400" stroke="#2fb84a" stroke-width="3.400"/></svg>
<div class="abs" style="left:571px;top:139px;width:23px;height:23px;background:#fafafa;border:1px solid #adadad;box-shadow:inset 0 0 0 1px #f0f0f0"></div>
<svg class="abs" style="left:573px;top:141px;width:19px;height:19px" viewBox="0 0 19 19"><path d="M1.500 1.500l16 16M17.500 1.500l-16 16" stroke="#e01820" stroke-width="4.200"/></svg>
<div class="abs" style="left:612px;top:105px;width:171px;height:66px;border:1px solid #dcdcdc;box-shadow:inset 1px 1px 0 #fff, 1px 1px 0 #fff"></div>
<div class="t" style="left:617px;top:99px;letter-spacing:-0.073px;background:#f0f0f0;padding:0 2px 0 1px">Difficulty Setup</div>
<div class="abs" style="left:616px;top:114px;width:163px;height:52px;background:#fff"></div>
<div class="abs" style="left:616px;top:114px;width:163px;height:16px;background:#3399ff"></div>
<div class="t" style="left:616px;top:116px;letter-spacing:0.021px;color:#fff">Default</div>
<div class="abs" style="left:791px;top:109px;width:23px;height:23px;background:#fafafa;border:1px solid #adadad;box-shadow:inset 0 0 0 1px #f0f0f0"></div>
<svg class="abs" style="left:793px;top:111px;width:19px;height:19px" viewBox="0 0 19 19"><path d="M9.500 .5v18M.5 9.500h18" stroke="#1f9a38" stroke-width="5"/><path d="M9.500 1.300v16.400M1.300 9.500h16.400" stroke="#2fb84a" stroke-width="3.400"/></svg>
<div class="abs" style="left:791px;top:139px;width:23px;height:23px;background:#fafafa;border:1px solid #adadad;box-shadow:inset 0 0 0 1px #f0f0f0"></div>
<svg class="abs" style="left:793px;top:141px;width:19px;height:19px" viewBox="0 0 19 19"><path d="M1.500 1.500l16 16M17.500 1.500l-16 16" stroke="#e01820" stroke-width="4.200"/></svg>
<div class="abs" style="left:417px;top:190px;width:146px;height:341px;border:1px solid #dcdcdc;box-shadow:inset 1px 1px 0 #fff, 1px 1px 0 #fff"></div>
<div class="t" style="left:422px;top:184px;letter-spacing:-0.44px;background:#f0f0f0;padding:0 2px 0 1px">Mission Cycle Missions</div>
<div class="abs" style="left:421px;top:200px;width:119px;height:22px;background:#fcfcfc"></div>
<div class="t" style="left:425px;top:206px;letter-spacing:-0.473px;">Mission Name</div>
<div class="abs" style="left:421px;top:224px;width:121px;height:302px;overflow:hidden;background:#00ffff">
<div class="abs" style="left:0;top:0;width:121px;height:15px;background:#3399ff"></div><div class="abs" style="left:0;top:15px;width:121px;height:1px;background:#3c9c9c"></div><div class="t" style="left:0px;top:1px;letter-spacing:0.143px;color:#fff">test - pehota</div>
<div class="abs" style="left:0;top:31px;width:121px;height:1px;background:#3c9c9c"></div><div class="t" style="left:0px;top:17px;letter-spacing:-0.107px;">тест корабли</div>
<div class="abs" style="left:0;top:47px;width:121px;height:1px;background:#3c9c9c"></div><div class="t" style="left:0px;top:33px;letter-spacing:-0.661px;">ДУЭЛЬ-КРЫМ</div>
<div class="abs" style="left:0;top:63px;width:121px;height:1px;background:#3c9c9c"></div><div class="t" style="left:0px;top:49px;letter-spacing:-0.176px;">Операция Клещи</div>
<div class="abs" style="left:0;top:79px;width:121px;height:1px;background:#3c9c9c"></div><div class="t" style="left:0px;top:65px;letter-spacing:-0.098px;">Crimea in the fire-v413</div>
<div class="abs" style="left:0;top:95px;width:121px;height:1px;background:#3c9c9c"></div><div class="t" style="left:0px;top:81px;letter-spacing:-0.175px;">Sunrise over Stalingra...</div>
<div class="abs" style="left:0;top:111px;width:121px;height:1px;background:#3c9c9c"></div><div class="t" style="left:0px;top:97px;letter-spacing:-0.163px;">Moscow-1-41w</div>
<div class="abs" style="left:0;top:127px;width:121px;height:1px;background:#3c9c9c"></div><div class="t" style="left:0px;top:113px;letter-spacing:-0.324px;">Kiev-3m-43</div>
<div class="abs" style="left:0;top:143px;width:121px;height:1px;background:#3c9c9c"></div><div class="t" style="left:0px;top:129px;letter-spacing:-0.184px;">Leningrad-4m-43</div>
<div class="abs" style="left:0;top:159px;width:121px;height:1px;background:#3c9c9c"></div><div class="t" style="left:0px;top:145px;letter-spacing:-0.082px;">Balaton-1-45</div>
<div class="abs" style="left:0;top:175px;width:121px;height:1px;background:#3c9c9c"></div><div class="t" style="left:0px;top:161px;letter-spacing:-0.326px;">Kavkaz-2m-42</div>
<div class="abs" style="left:0;top:191px;width:121px;height:1px;background:#3c9c9c"></div><div class="t" style="left:0px;top:177px;letter-spacing:-0.169px;">Leningrad-2m-43w</div>
<div class="abs" style="left:0;top:207px;width:121px;height:1px;background:#3c9c9c"></div><div class="t" style="left:0px;top:193px;letter-spacing:-0.324px;">Kiev-2m-41</div>
<div class="abs" style="left:0;top:223px;width:121px;height:1px;background:#3c9c9c"></div><div class="t" style="left:0px;top:209px;letter-spacing:-0.326px;">Kavkaz-1m-43</div>
<div class="abs" style="left:0;top:239px;width:121px;height:1px;background:#3c9c9c"></div><div class="t" style="left:0px;top:225px;letter-spacing:-0.103px;">Leningrad-3-42w</div>
<div class="abs" style="left:0;top:255px;width:121px;height:1px;background:#3c9c9c"></div><div class="t" style="left:0px;top:241px;letter-spacing:-0.02px;">Africa</div>
<div class="abs" style="left:0;top:271px;width:121px;height:1px;background:#3c9c9c"></div><div class="t" style="left:0px;top:257px;letter-spacing:-0.195px;">Средиземноморье</div>
<div class="abs" style="left:0;top:287px;width:121px;height:1px;background:#3c9c9c"></div><div class="t" style="left:0px;top:273px;letter-spacing:-0.131px;">VtorzhenieVAfriku</div>
<div class="abs" style="left:0;top:303px;width:121px;height:1px;background:#3c9c9c"></div><div class="t" style="left:0px;top:289px;letter-spacing:-0.082px;">Balaton-2-44</div>
<div class="abs" style="left:120px;top:0;width:1px;height:303px;background:#3c9c9c"></div></div>
<div class="abs" style="left:543px;top:224px;width:16px;height:302px;background:#f0f0f0"></div>
<svg class="abs" style="left:546px;top:230px;width:9px;height:6px" viewBox="0 0 9 6"><path d="M.8 5l3.700-3.700 3.700 3.700" fill="none" stroke="#505050" stroke-width="1.700"/></svg>
<svg class="abs" style="left:546px;top:515px;width:9px;height:6px" viewBox="0 0 9 6"><path d="M.8 1l3.700 3.700 3.700-3.700" fill="none" stroke="#505050" stroke-width="1.700"/></svg>
<div class="abs" style="left:543px;top:241px;width:15px;height:267px;background:#cdcdcd"></div>
<div class="abs" style="left:571px;top:214px;width:23px;height:23px;background:#fafafa;border:1px solid #adadad;box-shadow:inset 0 0 0 1px #f0f0f0"></div>
<svg class="abs" style="left:573px;top:216px;width:19px;height:19px" viewBox="0 0 19 19"><path d="M1.500 1.500l16 16M17.500 1.500l-16 16" stroke="#e01820" stroke-width="4.200"/></svg>
<div class="abs" style="left:571px;top:244px;width:23px;height:23px;background:#fafafa;border:1px solid #adadad;box-shadow:inset 0 0 0 1px #f0f0f0"></div>
<svg class="abs" style="left:573px;top:246px;width:19px;height:19px" viewBox="0 0 19 19"><path d="M6.500 18v-7h-5.500l8.500-10 8.500 10h-5.500v7z" fill="#6c8486"/></svg>
<div class="abs" style="left:571px;top:274px;width:23px;height:23px;background:#fafafa;border:1px solid #adadad;box-shadow:inset 0 0 0 1px #f0f0f0"></div>
<svg class="abs" style="left:573px;top:276px;width:19px;height:19px" viewBox="0 0 19 19"><path d="M6.500 1v7h-5.500l8.500 10 8.500-10h-5.500v-7z" fill="#6c8486"/></svg>
<div class="abs" style="left:612px;top:190px;width:201px;height:344px;border:1px solid #dcdcdc;box-shadow:inset 1px 1px 0 #fff, 1px 1px 0 #fff"></div>
<div class="t" style="left:617px;top:184px;letter-spacing:-0.061px;background:#f0f0f0;padding:0 2px 0 1px">Difficulty Settings</div>
<div class="abs" style="left:616px;top:200px;width:174px;height:22px;background:#fcfcfc"></div>
<div class="abs" style="left:761px;top:200px;width:2px;height:22px;background:#ececec"></div>
<div class="t" style="left:620px;top:206px;letter-spacing:-0.035px;">Setting</div>
<div class="t" style="left:768px;top:206px;letter-spacing:-0.056px;">...</div>
<div class="abs" style="left:616px;top:224px;width:176px;height:307px;overflow:hidden;background:#00ffff">
<div class="abs" style="left:0;top:15px;width:176px;height:1px;background:#3c9c9c"></div><div class="t" style="left:0px;top:1px;letter-spacing:-0.229px;">BlackoutsRedouts</div><div class="abs" style="left:155px;top:2px;width:12px;height:12px;background:#fff;border:1px solid #333"></div><svg class="abs" style="left:156px;top:3px;width:10px;height:10px" viewBox="0 0 10 10"><path d="M1.500 5l2.500 2.800 4.500-6" fill="none" stroke="#111" stroke-width="1.800"/></svg>
<div class="abs" style="left:0;top:31px;width:176px;height:1px;background:#3c9c9c"></div><div class="t" style="left:0px;top:17px;letter-spacing:-0.401px;">StallsSpins</div><div class="abs" style="left:155px;top:18px;width:12px;height:12px;background:#fff;border:1px solid #333"></div><svg class="abs" style="left:156px;top:19px;width:10px;height:10px" viewBox="0 0 10 10"><path d="M1.500 5l2.500 2.800 4.500-6" fill="none" stroke="#111" stroke-width="1.800"/></svg>
<div class="abs" style="left:0;top:47px;width:176px;height:1px;background:#3c9c9c"></div><div class="t" style="left:0px;top:33px;letter-spacing:-0.355px;">NoFriendlyViews</div><div class="abs" style="left:155px;top:34px;width:12px;height:12px;background:#fff;border:1px solid #333"></div><svg class="abs" style="left:156px;top:35px;width:10px;height:10px" viewBox="0 0 10 10"><path d="M1.500 5l2.500 2.800 4.500-6" fill="none" stroke="#111" stroke-width="1.800"/></svg>
<div class="abs" style="left:0;top:63px;width:176px;height:1px;background:#3c9c9c"></div><div class="t" style="left:0px;top:49px;letter-spacing:-0.35px;">LimitedFuel</div><div class="abs" style="left:155px;top:50px;width:12px;height:12px;background:#fff;border:1px solid #333"></div><svg class="abs" style="left:156px;top:51px;width:10px;height:10px" viewBox="0 0 10 10"><path d="M1.500 5l2.500 2.800 4.500-6" fill="none" stroke="#111" stroke-width="1.800"/></svg>
<div class="abs" style="left:0;top:79px;width:176px;height:1px;background:#3c9c9c"></div><div class="t" style="left:0px;top:65px;letter-spacing:-0.192px;">WindTurbulence</div><div class="abs" style="left:155px;top:66px;width:12px;height:12px;background:#fff;border:1px solid #333"></div><svg class="abs" style="left:156px;top:67px;width:10px;height:10px" viewBox="0 0 10 10"><path d="M1.500 5l2.500 2.800 4.500-6" fill="none" stroke="#111" stroke-width="1.800"/></svg>
<div class="abs" style="left:0;top:95px;width:176px;height:1px;background:#3c9c9c"></div><div class="t" style="left:0px;top:81px;letter-spacing:-0.373px;">Clouds</div><div class="abs" style="left:155px;top:82px;width:12px;height:12px;background:#fff;border:1px solid #333"></div><svg class="abs" style="left:156px;top:83px;width:10px;height:10px" viewBox="0 0 10 10"><path d="M1.500 5l2.500 2.800 4.500-6" fill="none" stroke="#111" stroke-width="1.800"/></svg>
<div class="abs" style="left:0;top:111px;width:176px;height:1px;background:#3c9c9c"></div><div class="t" style="left:0px;top:97px;letter-spacing:-0.537px;">NoEnemyViews</div><div class="abs" style="left:155px;top:98px;width:12px;height:12px;background:#fff;border:1px solid #333"></div><svg class="abs" style="left:156px;top:99px;width:10px;height:10px" viewBox="0 0 10 10"><path d="M1.500 5l2.500 2.800 4.500-6" fill="none" stroke="#111" stroke-width="1.800"/></svg>
<div class="abs" style="left:0;top:127px;width:176px;height:1px;background:#3c9c9c"></div><div class="t" style="left:0px;top:113px;letter-spacing:-0.111px;">NoFogOfWarIcons</div><div class="abs" style="left:155px;top:114px;width:12px;height:12px;background:#fff;border:1px solid #333"></div><svg class="abs" style="left:156px;top:115px;width:10px;height:10px" viewBox="0 0 10 10"><path d="M1.500 5l2.500 2.800 4.500-6" fill="none" stroke="#111" stroke-width="1.800"/></svg>
<div class="abs" style="left:0;top:143px;width:176px;height:1px;background:#3c9c9c"></div><div class="t" style="left:0px;top:129px;letter-spacing:-0.275px;">NoMapIcons</div><div class="abs" style="left:155px;top:130px;width:12px;height:12px;background:#fff;border:1px solid #333"></div><svg class="abs" style="left:156px;top:131px;width:10px;height:10px" viewBox="0 0 10 10"><path d="M1.500 5l2.500 2.800 4.500-6" fill="none" stroke="#111" stroke-width="1.800"/></svg>
<div class="abs" style="left:0;top:159px;width:176px;height:1px;background:#3c9c9c"></div><div class="t" style="left:0px;top:145px;letter-spacing:-0.521px;">BombFuzes</div><div class="abs" style="left:155px;top:146px;width:12px;height:12px;background:#fff;border:1px solid #333"></div><svg class="abs" style="left:156px;top:147px;width:10px;height:10px" viewBox="0 0 10 10"><path d="M1.500 5l2.500 2.800 4.500-6" fill="none" stroke="#111" stroke-width="1.800"/></svg>
<div class="abs" style="left:0;top:175px;width:176px;height:1px;background:#3c9c9c"></div><div class="t" style="left:0px;top:161px;letter-spacing:0.147px;">FlutterEffect</div><div class="abs" style="left:155px;top:162px;width:12px;height:12px;background:#fff;border:1px solid #333"></div><svg class="abs" style="left:156px;top:163px;width:10px;height:10px" viewBox="0 0 10 10"><path d="M1.500 5l2.500 2.800 4.500-6" fill="none" stroke="#111" stroke-width="1.800"/></svg>
<div class="abs" style="left:0;top:191px;width:176px;height:1px;background:#3c9c9c"></div><div class="t" style="left:0px;top:177px;letter-spacing:-0.178px;">EngineOverheat</div><div class="abs" style="left:155px;top:178px;width:12px;height:12px;background:#fff;border:1px solid #333"></div><svg class="abs" style="left:156px;top:179px;width:10px;height:10px" viewBox="0 0 10 10"><path d="M1.500 5l2.500 2.800 4.500-6" fill="none" stroke="#111" stroke-width="1.800"/></svg>
<div class="abs" style="left:0;top:207px;width:176px;height:1px;background:#3c9c9c"></div><div class="t" style="left:0px;top:193px;letter-spacing:-0.398px;">NoSpeedBar</div><div class="abs" style="left:155px;top:194px;width:12px;height:12px;background:#fff;border:1px solid #333"></div><svg class="abs" style="left:156px;top:195px;width:10px;height:10px" viewBox="0 0 10 10"><path d="M1.500 5l2.500 2.800 4.500-6" fill="none" stroke="#111" stroke-width="1.800"/></svg>
<div class="abs" style="left:0;top:223px;width:176px;height:1px;background:#3c9c9c"></div><div class="t" style="left:0px;top:209px;letter-spacing:-0.029px;">TakeoffLanding</div><div class="abs" style="left:155px;top:210px;width:12px;height:12px;background:#fff;border:1px solid #333"></div><svg class="abs" style="left:156px;top:211px;width:10px;height:10px" viewBox="0 0 10 10"><path d="M1.500 5l2.500 2.800 4.500-6" fill="none" stroke="#111" stroke-width="1.800"/></svg>
<div class="abs" style="left:0;top:239px;width:176px;height:1px;background:#3c9c9c"></div><div class="t" style="left:0px;top:225px;letter-spacing:-0.126px;">FragileTorps</div><div class="abs" style="left:155px;top:226px;width:12px;height:12px;background:#fff;border:1px solid #333"></div><svg class="abs" style="left:156px;top:227px;width:10px;height:10px" viewBox="0 0 10 10"><path d="M1.500 5l2.500 2.800 4.500-6" fill="none" stroke="#111" stroke-width="1.800"/></svg>
<div class="abs" style="left:0;top:255px;width:176px;height:1px;background:#3c9c9c"></div><div class="t" style="left:0px;top:241px;letter-spacing:-0.297px;">RealisticGunnery</div><div class="abs" style="left:155px;top:242px;width:12px;height:12px;background:#fff;border:1px solid #333"></div><svg class="abs" style="left:156px;top:243px;width:10px;height:10px" viewBox="0 0 10 10"><path d="M1.500 5l2.500 2.800 4.500-6" fill="none" stroke="#111" stroke-width="1.800"/></svg>
<div class="abs" style="left:0;top:271px;width:176px;height:1px;background:#3c9c9c"></div><div class="t" style="left:0px;top:257px;letter-spacing:-0.294px;">NoOutsideViews</div><div class="abs" style="left:155px;top:258px;width:12px;height:12px;background:#fff;border:1px solid #333"></div><svg class="abs" style="left:156px;top:259px;width:10px;height:10px" viewBox="0 0 10 10"><path d="M1.500 5l2.500 2.800 4.500-6" fill="none" stroke="#111" stroke-width="1.800"/></svg>
<div class="abs" style="left:0;top:287px;width:176px;height:1px;background:#3c9c9c"></div><div class="t" style="left:0px;top:273px;letter-spacing:-0.251px;">RealisticRocketSpread</div><div class="abs" style="left:155px;top:274px;width:12px;height:12px;background:#fff;border:1px solid #333"></div><svg class="abs" style="left:156px;top:275px;width:10px;height:10px" viewBox="0 0 10 10"><path d="M1.500 5l2.500 2.800 4.500-6" fill="none" stroke="#111" stroke-width="1.800"/></svg>
<div class="abs" style="left:0;top:303px;width:176px;height:1px;background:#3c9c9c"></div><div class="t" style="left:0px;top:289px;letter-spacing:-0.166px;">NoInstantSuccess</div><div class="abs" style="left:155px;top:290px;width:12px;height:12px;background:#fff;border:1px solid #333"></div><svg class="abs" style="left:156px;top:291px;width:10px;height:10px" viewBox="0 0 10 10"><path d="M1.500 5l2.500 2.800 4.500-6" fill="none" stroke="#111" stroke-width="1.800"/></svg>
<div class="abs" style="left:0;top:319px;width:176px;height:1px;background:#3c9c9c"></div><div class="t" style="left:0px;top:305px;letter-spacing:-0.193px;">Vulnerability</div><div class="abs" style="left:155px;top:306px;width:12px;height:12px;background:#fff;border:1px solid #333"></div><svg class="abs" style="left:156px;top:307px;width:10px;height:10px" viewBox="0 0 10 10"><path d="M1.500 5l2.500 2.800 4.500-6" fill="none" stroke="#111" stroke-width="1.800"/></svg>
<div class="abs" style="left:146px;top:0;width:1px;height:307px;background:#3c9c9c"></div><div class="abs" style="left:175px;top:0;width:1px;height:307px;background:#3c9c9c"></div></div>
<div class="abs" style="left:793px;top:224px;width:16px;height:304px;background:#f0f0f0"></div>
<svg class="abs" style="left:796px;top:230px;width:9px;height:6px" viewBox="0 0 9 6"><path d="M.8 5l3.700-3.700 3.700 3.700" fill="none" stroke="#505050" stroke-width="1.700"/></svg>
<svg class="abs" style="left:796px;top:517px;width:9px;height:6px" viewBox="0 0 9 6"><path d="M.8 1l3.700 3.700 3.700-3.700" fill="none" stroke="#505050" stroke-width="1.700"/></svg>
<div class="abs" style="left:793px;top:241px;width:15px;height:127px;background:#cdcdcd"></div>
<div class="abs" style="left:86px;top:554px;width:148px;height:23px;background:linear-gradient(#f2f2f2,#e6e6e6);border:1px solid #adadad"></div>
<div class="t" style="left:10.0px;width:300px;text-align:center;top:559.0px;letter-spacing:-0.268px;">Write Mission Files</div>
<div class="abs" style="left:246px;top:554px;width:148px;height:23px;background:linear-gradient(#f2f2f2,#e6e6e6);border:1px solid #adadad"></div>
<div class="t" style="left:170.0px;width:300px;text-align:center;top:559.0px;letter-spacing:-0.293px;">Write Mission Cycles</div>
<div class="abs" style="left:406px;top:554px;width:73px;height:23px;background:linear-gradient(#f2f2f2,#e6e6e6);border:1px solid #adadad"></div>
<div class="t" style="left:292.5px;width:300px;text-align:center;top:559.0px;letter-spacing:-0.147px;">Reset</div>
<div class="abs" style="left:486px;top:554px;width:148px;height:23px;background:linear-gradient(#f2f2f2,#e6e6e6);border:1px solid #adadad"></div>
<div class="t" style="left:410.0px;width:300px;text-align:center;top:559.0px;letter-spacing:-0.33px;">Run Temp Mission</div>
<div class="abs" style="left:641px;top:554px;width:73px;height:23px;background:linear-gradient(#f2f2f2,#e6e6e6);border:1px solid #adadad"></div>
<div class="t" style="left:527.5px;width:300px;text-align:center;top:559.0px;letter-spacing:-0.518px;">Save</div>
<div class="abs" style="left:721px;top:554px;width:73px;height:23px;background:linear-gradient(#f2f2f2,#e6e6e6);border:1px solid #adadad"></div>
<div class="t" style="left:607.5px;width:300px;text-align:center;top:559.0px;letter-spacing:-0.373px;">Cancel</div>
<div class="abs" style="left:19px;top:596px;width:806px;height:30px;border:1px solid #fff;border-top-width:2px;border-right-color:#6e6e6e;border-bottom-color:#6e6e6e;background:#f0f0f0"></div>
<div class="t" style="left:30px;top:604px;letter-spacing:-0.174px;">IL2 Server</div>
<div class="abs" style="left:86px;top:599px;width:71px;height:23px;background:linear-gradient(#ebf4fc,#dcecfc);border:1px solid #3c9be8"></div>
<div class="t" style="left:-28.5px;width:300px;text-align:center;top:603.5px;letter-spacing:-0.138px;">Connect</div>
<div class="abs" style="left:165px;top:599px;width:83px;height:23px;background:linear-gradient(#f2f2f2,#e6e6e6);border:1px solid #adadad"></div>
<div class="t" style="left:56.5px;width:300px;text-align:center;top:603.5px;letter-spacing:-0.241px;">Disconnect</div>
<div class="t" style="left:269px;width:300px;text-align:center;top:604px;letter-spacing:-0.089px;">Running Mission ( test - pehota )</div>
<div class="t" style="left:591px;top:604px;letter-spacing:-0.013px;">Stats</div>
<div class="abs" style="left:628px;top:599px;width:45px;height:23px;background:linear-gradient(#f2f2f2,#e6e6e6);border:1px solid #adadad"></div>
<div class="t" style="left:500.5px;width:300px;text-align:center;top:603.5px;letter-spacing:-0.336px;">On</div>
<div class="abs" style="left:681px;top:599px;width:47px;height:23px;background:linear-gradient(#f2f2f2,#e6e6e6);border:1px solid #adadad"></div>
<div class="t" style="left:554.5px;width:300px;text-align:center;top:603.5px;letter-spacing:0.511px;">Off</div>
</div>
<div id="co" style="border:none;box-shadow:inset 0 0 0 1px #72b0e6">
<svg class="abs" style="left:11px;top:8px;width:16px;height:16px" viewBox="0 0 16 16"><rect width="16" height="16" fill="#7d9db6"/><path d="M8 0h8v6q-4-1-8-6z" fill="#d98a58"/><path d="M0 11h16v5h-16z" fill="#8fa0a4"/><path d="M10 13q4-1 6 1v2h-6z" fill="#b86a50"/><path d="M1 12.500l13-6.500" stroke="#1d3c78" stroke-width="1.800"/><path d="M3 3.500q3 1 5 5.500" stroke="#24488a" stroke-width="1.800" fill="none"/><path d="M4 11l3-2.500" stroke="#e8eef4" stroke-width="1"/></svg>
<div class="t" style="left:138px;width:400px;text-align:center;top:8px;font-size:15px;line-height:18px;letter-spacing:-0.2px;color:#1c1c1c">il2server.exe - Ярлык</div>
<div class="abs" style="left:578px;top:13px;width:8px;height:2px;background:#1a1a1a"></div>
<div class="abs" style="left:604px;top:7px;width:10px;height:8px;border:1px solid #1a1a1a;border-top-width:2px"></div>
<div class="abs" style="left:622px;top:1px;width:45px;height:20px;background:#c9504f"></div>
<svg class="abs" style="left:639px;top:6px;width:11px;height:11px" viewBox="0 0 11 11"><path d="M1.500 1.500l8 8M9.500 1.500l-8 8" stroke="#fff" stroke-width="1.800"/></svg>
<pre style="padding-top:1px">102&gt;difficulty ComplexEManagement 1
103&gt;difficulty Reliability 1
104&gt;mission DESTROY
ERROR mission: Mission NOT loaded
105&gt;mission LOAD FBDj/test - pehota.mis
Loading mission FBDj/test - pehota.mis...
Load bridges
Load static objects
Mission: Wrong chief&#x27;s type [DGenVehiclesPack.HART_T94_37_ch2]
Mission: Wrong chief&#x27;s type [DGenVehiclesPack.HART_T91_105_ch1]
Mission: Wrong chief&#x27;s type [DGenVehiclesPack.HART_T38_75_ch2]
Mission: Wrong chief&#x27;s type [DGenVehiclesPack.HART_P35_37_ch1]
Mission: Wrong chief&#x27;s type [DGenVehiclesPack.HART_ATG_45_ch1]
Mission: Wrong chief&#x27;s type [DGenVehiclesPack.Chariot]
Mission: Wrong chief&#x27;s type [DGenVehiclesPack.Chariot02]
Mission: Wrong chief&#x27;s type [DGenVehiclesPack.Chariot03]
Mission: Wrong chief&#x27;s type [DGenVehiclesPack.KitchenRU_H]
Mission: class &#x27;ships.Shipgio$IJNCDD106&#x27; not found
Mission: class &#x27;ships.Shipgio$IJNCDD106&#x27; not found
Mission: class &#x27;ships.ShipFlak$LST_1&#x27; not found
Mission: class &#x27;ships.ShipFlak$LST_3&#x27; not found
Mission: FBDj/test - pehota.mis is Loaded
106&gt;mission BEGIN
Mission: FBDj/test - pehota.mis is Playing
107&gt;</pre>
<div class="abs" style="left:649px;top:33px;width:17px;height:300px;background:#f0f0f0"></div>
<svg class="abs" style="left:653px;top:39px;width:9px;height:6px" viewBox="0 0 9 6"><path d="M.8 5l3.700-3.700 3.700 3.700" fill="none" stroke="#555" stroke-width="1.600"/></svg>
<svg class="abs" style="left:653px;top:322px;width:9px;height:6px" viewBox="0 0 9 6"><path d="M.8 1l3.700 3.700 3.700-3.700" fill="none" stroke="#555" stroke-width="1.600"/></svg>
<div class="abs" style="left:650px;top:294px;width:15px;height:22px;background:#cdcdcd"></div>
</div>
</body></html>
